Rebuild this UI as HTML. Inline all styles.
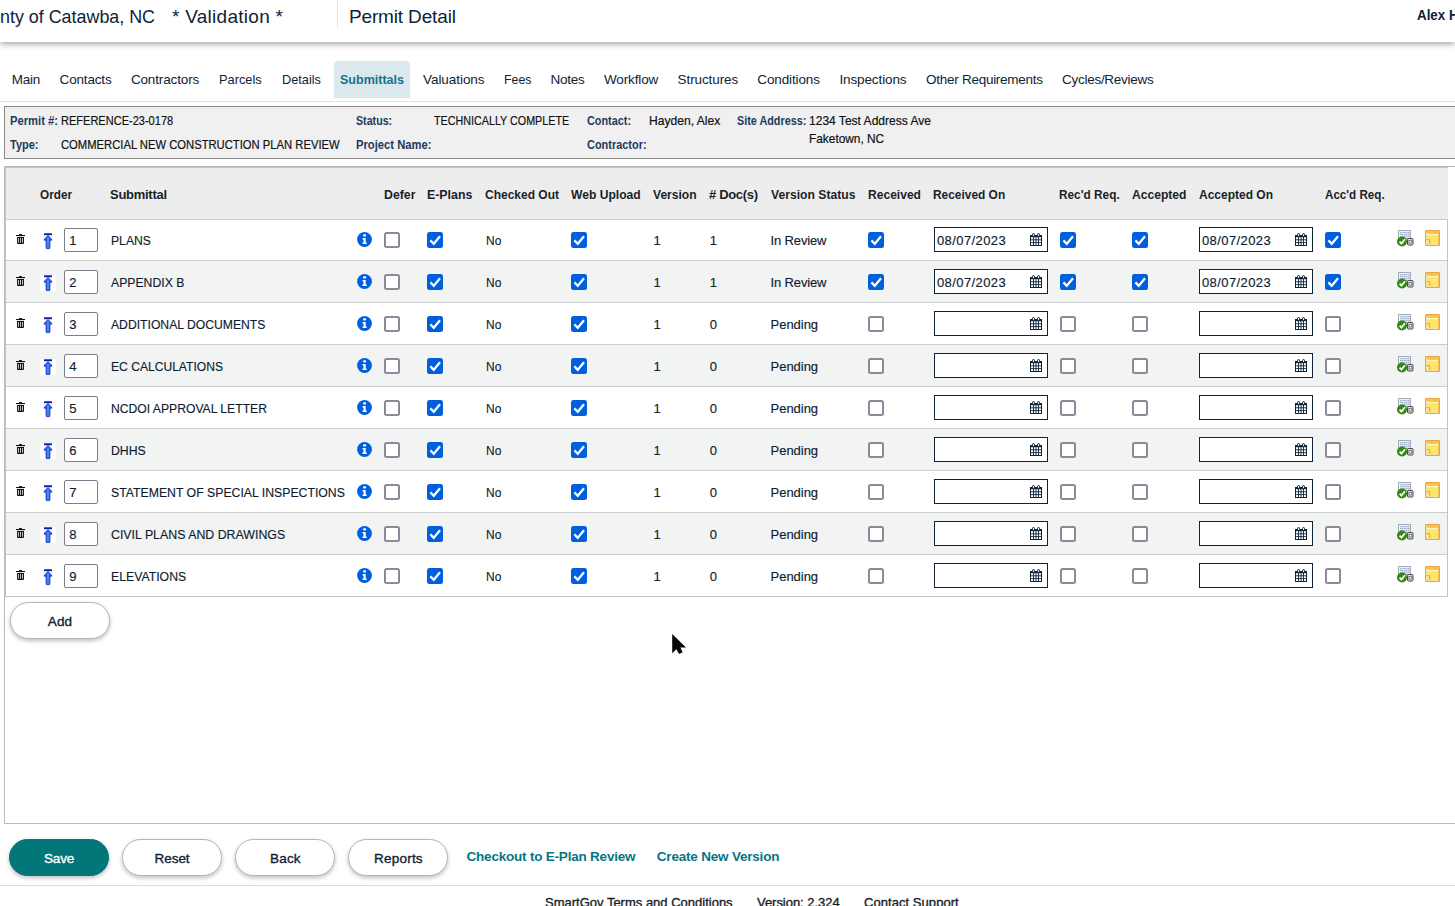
<!DOCTYPE html>
<html><head><meta charset="utf-8"><style>
html,body{margin:0;padding:0;background:#fff;width:1455px;height:906px;overflow:hidden;position:relative;font-family:"Liberation Sans",sans-serif;color:#0f2236}
.t{position:absolute;white-space:nowrap;line-height:normal}
.r{position:absolute;line-height:0}
.r svg{display:block}
.btn{position:absolute;box-sizing:border-box;border:1px solid #b5b5b5;border-radius:19px;background:#fff;box-shadow:0 2px 4px rgba(0,0,0,.25)}
</style></head><body>
<div class="r" style="left:0px;top:0px;width:1455px;height:42px;background:#fff;box-shadow:0 2px 6px rgba(0,0,0,.36);z-index:2"></div>
<div class="t" style="left:0.00px;top:5.70px;font-size:19px;transform:scaleX(0.9411);transform-origin:0 0;z-index:3">nty of Catawba, NC</div>
<div class="t" style="left:172.00px;top:5.70px;font-size:19px;letter-spacing:0.277px;z-index:3">* Validation *</div>
<div class="r" style="left:337px;top:0px;width:1px;height:28px;background:#e3e3e3;z-index:3"></div>
<div class="t" style="left:349.00px;top:5.70px;font-size:19px;letter-spacing:-0.150px;z-index:3">Permit Detail</div>
<div class="t" style="left:1417.40px;top:6.80px;font-size:14px;font-weight:bold;transform:scaleX(0.9541);transform-origin:0 0;z-index:3">Alex H</div>
<div class="r" style="left:334px;top:61px;width:76px;height:37px;background:#dbe8ee;border-radius:4px 4px 0 0"></div>
<div class="t" style="left:11.70px;top:72.20px;font-size:13.5px;letter-spacing:-0.267px;">Main</div>
<div class="t" style="left:59.60px;top:72.20px;font-size:13.5px;letter-spacing:-0.171px;">Contacts</div>
<div class="t" style="left:130.90px;top:72.20px;font-size:13.5px;letter-spacing:-0.140px;">Contractors</div>
<div class="t" style="left:219.00px;top:72.20px;font-size:13.5px;transform:scaleX(0.9489);transform-origin:0 0;">Parcels</div>
<div class="t" style="left:281.60px;top:72.20px;font-size:13.5px;transform:scaleX(0.9443);transform-origin:0 0;">Details</div>
<div class="t" style="left:340.00px;top:72.20px;font-size:13.5px;font-weight:bold;color:#17738a;transform:scaleX(0.9275);transform-origin:0 0;">Submittals</div>
<div class="t" style="left:423.00px;top:72.20px;font-size:13.5px;letter-spacing:-0.056px;">Valuations</div>
<div class="t" style="left:503.80px;top:72.20px;font-size:13.5px;transform:scaleX(0.9133);transform-origin:0 0;">Fees</div>
<div class="t" style="left:550.60px;top:72.20px;font-size:13.5px;letter-spacing:-0.300px;">Notes</div>
<div class="t" style="left:604.00px;top:72.20px;font-size:13.5px;letter-spacing:-0.143px;">Workflow</div>
<div class="t" style="left:677.60px;top:72.20px;font-size:13.5px;letter-spacing:-0.100px;">Structures</div>
<div class="t" style="left:757.30px;top:72.20px;font-size:13.5px;letter-spacing:-0.122px;">Conditions</div>
<div class="t" style="left:839.40px;top:72.20px;font-size:13.5px;letter-spacing:-0.110px;">Inspections</div>
<div class="t" style="left:926.00px;top:72.20px;font-size:13.5px;letter-spacing:-0.265px;">Other Requirements</div>
<div class="t" style="left:1062.00px;top:72.20px;font-size:13.5px;letter-spacing:-0.269px;">Cycles/Reviews</div>
<div class="r" style="left:0px;top:101px;width:1455px;height:1px;background:#e2e2e2"></div>
<div class="r" style="left:4px;top:106px;width:1460px;height:51px;background:#f0f0f0;border:1px solid #8a8a8a;box-sizing:content-box"></div>
<div class="t" style="left:10.00px;top:114.20px;font-size:12.5px;font-weight:bold;color:#1d3a5c;transform:scaleX(0.8972);transform-origin:0 0;">Permit #:</div>
<div class="t" style="left:61.20px;top:113.20px;font-size:13px;-webkit-text-stroke:0.2px currentColor;color:#111111;transform:scaleX(0.8482);transform-origin:0 0;">REFERENCE-23-0178</div>
<div class="t" style="left:10.00px;top:138.20px;font-size:12.5px;font-weight:bold;color:#1d3a5c;transform:scaleX(0.8796);transform-origin:0 0;">Type:</div>
<div class="t" style="left:61.20px;top:137.20px;font-size:13px;-webkit-text-stroke:0.2px currentColor;color:#111111;transform:scaleX(0.8642);transform-origin:0 0;">COMMERCIAL NEW CONSTRUCTION PLAN REVIEW</div>
<div class="t" style="left:356.00px;top:114.20px;font-size:12.5px;font-weight:bold;color:#1d3a5c;transform:scaleX(0.8538);transform-origin:0 0;">Status:</div>
<div class="t" style="left:434.30px;top:113.20px;font-size:13px;-webkit-text-stroke:0.2px currentColor;color:#111111;transform:scaleX(0.8265);transform-origin:0 0;">TECHNICALLY COMPLETE</div>
<div class="t" style="left:356.00px;top:138.20px;font-size:12.5px;font-weight:bold;color:#1d3a5c;transform:scaleX(0.8977);transform-origin:0 0;">Project Name:</div>
<div class="t" style="left:586.90px;top:114.20px;font-size:12.5px;font-weight:bold;color:#1d3a5c;transform:scaleX(0.8679);transform-origin:0 0;">Contact:</div>
<div class="t" style="left:649.30px;top:113.20px;font-size:13px;-webkit-text-stroke:0.2px currentColor;color:#111111;transform:scaleX(0.9310);transform-origin:0 0;">Hayden, Alex</div>
<div class="t" style="left:586.90px;top:138.20px;font-size:12.5px;font-weight:bold;color:#1d3a5c;transform:scaleX(0.8752);transform-origin:0 0;">Contractor:</div>
<div class="t" style="left:736.50px;top:114.30px;font-size:12.5px;font-weight:bold;color:#1d3a5c;transform:scaleX(0.8652);transform-origin:0 0;">Site Address:</div>
<div class="t" style="left:808.70px;top:113.30px;font-size:13px;-webkit-text-stroke:0.2px currentColor;color:#111111;transform:scaleX(0.9250);transform-origin:0 0;">1234 Test Address Ave</div>
<div class="t" style="left:808.70px;top:130.60px;font-size:13px;-webkit-text-stroke:0.2px currentColor;color:#111111;transform:scaleX(0.9128);transform-origin:0 0;">Faketown, NC</div>
<div class="r" style="left:4px;top:166px;width:1460px;height:656px;border:1px solid #b9b9b9;background:#fff;box-sizing:content-box"></div>
<div class="r" style="left:5px;top:167px;width:1443px;height:52px;background:#ededed"></div>
<div class="r" style="left:5px;top:167px;width:1443px;height:430px;border:1px solid #c4c4c4;border-right:0;box-sizing:border-box"></div>
<div class="r" style="left:1447px;top:219px;width:1px;height:378px;background:#c4c4c4"></div>
<div class="r" style="left:5px;top:219px;width:1443px;height:1px;background:#cbcbcb"></div>
<div class="t" style="left:40.00px;top:187.20px;font-size:13px;font-weight:bold;color:#1a1f2a;transform:scaleX(0.9040);transform-origin:0 0;">Order</div>
<div class="t" style="left:110.00px;top:187.20px;font-size:13px;font-weight:bold;color:#1a1f2a;letter-spacing:-0.275px;">Submittal</div>
<div class="t" style="left:384.00px;top:187.20px;font-size:13px;font-weight:bold;color:#1a1f2a;transform:scaleX(0.9458);transform-origin:0 0;">Defer</div>
<div class="t" style="left:427.00px;top:187.20px;font-size:13px;font-weight:bold;color:#1a1f2a;transform:scaleX(0.9497);transform-origin:0 0;">E-Plans</div>
<div class="t" style="left:485.00px;top:187.20px;font-size:13px;font-weight:bold;color:#1a1f2a;transform:scaleX(0.9227);transform-origin:0 0;">Checked Out</div>
<div class="t" style="left:571.00px;top:187.20px;font-size:13px;font-weight:bold;color:#1a1f2a;transform:scaleX(0.9306);transform-origin:0 0;">Web Upload</div>
<div class="t" style="left:653.40px;top:187.20px;font-size:13px;font-weight:bold;color:#1a1f2a;transform:scaleX(0.9277);transform-origin:0 0;">Version</div>
<div class="t" style="left:709.00px;top:187.20px;font-size:13px;font-weight:bold;color:#1a1f2a;letter-spacing:-0.329px;"># Doc(s)</div>
<div class="t" style="left:770.60px;top:187.20px;font-size:13px;font-weight:bold;color:#1a1f2a;transform:scaleX(0.9347);transform-origin:0 0;">Version Status</div>
<div class="t" style="left:868.00px;top:187.20px;font-size:13px;font-weight:bold;color:#1a1f2a;transform:scaleX(0.9282);transform-origin:0 0;">Received</div>
<div class="t" style="left:932.80px;top:187.20px;font-size:13px;font-weight:bold;color:#1a1f2a;transform:scaleX(0.9162);transform-origin:0 0;">Received On</div>
<div class="t" style="left:1059.00px;top:187.20px;font-size:13px;font-weight:bold;color:#1a1f2a;transform:scaleX(0.9100);transform-origin:0 0;">Rec'd Req.</div>
<div class="t" style="left:1132.00px;top:187.20px;font-size:13px;font-weight:bold;color:#1a1f2a;transform:scaleX(0.9299);transform-origin:0 0;">Accepted</div>
<div class="t" style="left:1199.00px;top:187.20px;font-size:13px;font-weight:bold;color:#1a1f2a;transform:scaleX(0.9227);transform-origin:0 0;">Accepted On</div>
<div class="t" style="left:1325.00px;top:187.20px;font-size:13px;font-weight:bold;color:#1a1f2a;transform:scaleX(0.8951);transform-origin:0 0;">Acc'd Req.</div>
<div class="r" style="left:16px;top:234px;"><svg width="10" height="11" viewBox="0 0 10 11"><rect x="3" y="0" width="3" height="1.3" rx=".6" fill="#111"/><rect x="0" y="1" width="9" height="1.1" fill="#111"/><path d="M1 3 H8 V9 Q8 10 7 10 H2 Q1 10 1 9 Z" fill="#111"/><rect x="1.95" y="4" width=".9" height="4.8" fill="#ddd"/><rect x="4.05" y="4" width=".9" height="4.8" fill="#ddd"/><rect x="6.15" y="4" width=".9" height="4.8" fill="#ddd"/></svg></div>
<div class="r" style="left:40px;top:233px;"><svg width="16" height="16" viewBox="0 0 16 16"><rect x="0" y="0" width="16" height="16" fill="#fff"/><rect x="4" y="0.3" width="8" height="1.9" fill="#0a1aa8"/><path d="M8 2.6 L11.8 6.3 L11.8 7.2 L9.9 7.2 L9.9 15 Q9.9 15.8 9 15.8 L7 15.8 Q6.1 15.8 6.1 15 L6.1 7.2 L4.2 7.2 L4.2 6.3 Z" fill="#2a62e6" stroke="#0b2bc0" stroke-width=".8"/><path d="M8 4.2 V14.8" stroke="#6aa8f6" stroke-width="1.1"/></svg></div>
<div class="r" style="left:64px;top:228px;width:34px;height:24px;border:1px solid #7d7d8c;border-radius:2px;box-sizing:border-box;background:#fff"></div>
<div class="t" style="left:69.30px;top:232.90px;font-size:13px;-webkit-text-stroke:0.15px currentColor;color:#0e1c30;">1</div>
<div class="t" style="left:110.50px;top:232.90px;font-size:13px;-webkit-text-stroke:0.15px currentColor;color:#0e1c30;transform:scaleX(0.9357);transform-origin:0 0;">PLANS</div>
<div class="r" style="left:357px;top:232px;"><svg width="15" height="15" viewBox="0 0 15 15"><circle cx="7.5" cy="7.5" r="7.4" fill="#005fdc"/><rect x="6.1" y="2.2" width="3" height="2.4" rx=".8" fill="#fff"/><path d="M5.6 6.1 H8.7 V10.4 H9.7 V11.9 H5.5 V10.4 H6.5 V7.6 H5.6 Z" fill="#fff"/></svg></div>
<div class="r" style="left:384px;top:232px;"><svg width="16" height="16" viewBox="0 0 16 16"><rect x="1" y="1" width="14" height="14" rx="1.5" fill="#fff" stroke="#8a8a98" stroke-width="2"/></svg></div>
<div class="r" style="left:427px;top:232px;"><svg width="16" height="16" viewBox="0 0 16 16"><rect x="0" y="0" width="16" height="16" rx="2.5" fill="#005fdc"/><path d="M3.4 8.4 L6.8 11.8 L13 4.2" fill="none" stroke="#fff" stroke-width="2.2"/></svg></div>
<div class="t" style="left:485.60px;top:232.90px;font-size:13px;-webkit-text-stroke:0.15px currentColor;color:#0e1c30;transform:scaleX(0.9194);transform-origin:0 0;">No</div>
<div class="r" style="left:571px;top:232px;"><svg width="16" height="16" viewBox="0 0 16 16"><rect x="0" y="0" width="16" height="16" rx="2.5" fill="#005fdc"/><path d="M3.4 8.4 L6.8 11.8 L13 4.2" fill="none" stroke="#fff" stroke-width="2.2"/></svg></div>
<div class="t" style="left:653.40px;top:232.90px;font-size:13px;-webkit-text-stroke:0.15px currentColor;color:#0e1c30;">1</div>
<div class="t" style="left:709.70px;top:232.90px;font-size:13px;-webkit-text-stroke:0.15px currentColor;color:#0e1c30;">1</div>
<div class="t" style="left:770.60px;top:232.90px;font-size:13px;-webkit-text-stroke:0.15px currentColor;color:#0e1c30;letter-spacing:-0.156px;">In Review</div>
<div class="r" style="left:868px;top:232px;"><svg width="16" height="16" viewBox="0 0 16 16"><rect x="0" y="0" width="16" height="16" rx="2.5" fill="#005fdc"/><path d="M3.4 8.4 L6.8 11.8 L13 4.2" fill="none" stroke="#fff" stroke-width="2.2"/></svg></div>
<div class="r" style="left:934px;top:227px;width:114px;height:25px;border:1px solid #0f2236;box-sizing:border-box;background:#fff"></div>
<div class="r" style="left:1030px;top:233px;"><svg width="12" height="13" viewBox="0 0 12 13"><rect x="0.5" y="2.5" width="11" height="10" fill="#fff" stroke="#0f2236" stroke-width="1"/><rect x="0" y="2" width="12" height="2.2" fill="#0f2236"/><rect x="2.5" y="0.5" width="2" height="3" rx="1" fill="#dfe6ee" stroke="#0f2236" stroke-width="1"/><rect x="7.5" y="0.5" width="2" height="3" rx="1" fill="#dfe6ee" stroke="#0f2236" stroke-width="1"/><path d="M3.5 4 V12.5 M6 4 V12.5 M8.5 4 V12.5 M0.5 6.8 H11.5 M0.5 9.6 H11.5" stroke="#0f2236" stroke-width=".9"/></svg></div>
<div class="r" style="left:1060px;top:232px;"><svg width="16" height="16" viewBox="0 0 16 16"><rect x="0" y="0" width="16" height="16" rx="2.5" fill="#005fdc"/><path d="M3.4 8.4 L6.8 11.8 L13 4.2" fill="none" stroke="#fff" stroke-width="2.2"/></svg></div>
<div class="r" style="left:1132px;top:232px;"><svg width="16" height="16" viewBox="0 0 16 16"><rect x="0" y="0" width="16" height="16" rx="2.5" fill="#005fdc"/><path d="M3.4 8.4 L6.8 11.8 L13 4.2" fill="none" stroke="#fff" stroke-width="2.2"/></svg></div>
<div class="r" style="left:1199px;top:227px;width:114px;height:25px;border:1px solid #0f2236;box-sizing:border-box;background:#fff"></div>
<div class="r" style="left:1295px;top:233px;"><svg width="12" height="13" viewBox="0 0 12 13"><rect x="0.5" y="2.5" width="11" height="10" fill="#fff" stroke="#0f2236" stroke-width="1"/><rect x="0" y="2" width="12" height="2.2" fill="#0f2236"/><rect x="2.5" y="0.5" width="2" height="3" rx="1" fill="#dfe6ee" stroke="#0f2236" stroke-width="1"/><rect x="7.5" y="0.5" width="2" height="3" rx="1" fill="#dfe6ee" stroke="#0f2236" stroke-width="1"/><path d="M3.5 4 V12.5 M6 4 V12.5 M8.5 4 V12.5 M0.5 6.8 H11.5 M0.5 9.6 H11.5" stroke="#0f2236" stroke-width=".9"/></svg></div>
<div class="r" style="left:1325px;top:232px;"><svg width="16" height="16" viewBox="0 0 16 16"><rect x="0" y="0" width="16" height="16" rx="2.5" fill="#005fdc"/><path d="M3.4 8.4 L6.8 11.8 L13 4.2" fill="none" stroke="#fff" stroke-width="2.2"/></svg></div>
<div class="t" style="left:937.00px;top:232.90px;font-size:13px;-webkit-text-stroke:0.15px currentColor;color:#0e1c30;letter-spacing:0.394px;">08/07/2023</div>
<div class="t" style="left:1202.00px;top:232.90px;font-size:13px;-webkit-text-stroke:0.15px currentColor;color:#0e1c30;letter-spacing:0.394px;">08/07/2023</div>
<div class="r" style="left:1397px;top:230px;"><svg width="17" height="17" viewBox="0 0 17 17"><rect x="1.5" y="0.5" width="12" height="8" fill="#eef2f8" stroke="#a3abb8" stroke-width="1"/><rect x="3.2" y="2" width="1.3" height="1.3" fill="#93a6c2"/><rect x="5.2" y="2" width="1.3" height="1.3" fill="#93a6c2"/><rect x="7.2" y="2" width="1.3" height="1.3" fill="#93a6c2"/><rect x="9.2" y="2" width="1.3" height="1.3" fill="#93a6c2"/><rect x="11.2" y="2" width="1.3" height="1.3" fill="#93a6c2"/><rect x="3.2" y="4" width="1.3" height="1.3" fill="#93a6c2"/><rect x="5.2" y="4" width="1.3" height="1.3" fill="#93a6c2"/><rect x="7.2" y="4" width="1.3" height="1.3" fill="#93a6c2"/><rect x="9.2" y="4" width="1.3" height="1.3" fill="#93a6c2"/><rect x="11.2" y="4" width="1.3" height="1.3" fill="#93a6c2"/><rect x="3.2" y="6" width="1.3" height="1.3" fill="#93a6c2"/><rect x="5.2" y="6" width="1.3" height="1.3" fill="#93a6c2"/><rect x="7.2" y="6" width="1.3" height="1.3" fill="#93a6c2"/><rect x="9.2" y="6" width="1.3" height="1.3" fill="#93a6c2"/><rect x="11.2" y="6" width="1.3" height="1.3" fill="#93a6c2"/><rect x="10.5" y="8.5" width="5.5" height="6.5" rx="1" fill="#d8d8d8" stroke="#4a4a4a" stroke-width="1"/><rect x="12" y="10.6" width="2.6" height="2.4" fill="#fff" stroke="#444" stroke-width=".6"/><circle cx="5" cy="11.5" r="5" fill="#348812"/><path d="M2.6 11.6 L4.5 13.6 L7.9 9.3" fill="none" stroke="#fff" stroke-width="1.7"/></svg></div>
<div class="r" style="left:1425px;top:230px;"><svg width="15" height="16" viewBox="0 0 15 16"><rect x="0.75" y="0.75" width="13.5" height="14.5" rx=".6" fill="#fde56a" stroke="#eda24a" stroke-width="1.5"/><rect x="2" y="2" width="11" height="1.8" fill="#f3c543"/><rect x="2" y="4" width="11" height="1.2" fill="#fef6c0"/><path d="M1.5 2 V14.5 H13" fill="none" stroke="#fef6c0" stroke-width=".6"/><path d="M1.5 9.6 H4.8 V14.2" fill="none" stroke="#e6a35c" stroke-width="1"/></svg></div>
<div class="r" style="left:6px;top:261px;width:1441px;height:41px;background:#f2f4f4"></div>
<div class="r" style="left:6px;top:260px;width:1441px;height:1px;background:#cdcdcd"></div>
<div class="r" style="left:16px;top:276px;"><svg width="10" height="11" viewBox="0 0 10 11"><rect x="3" y="0" width="3" height="1.3" rx=".6" fill="#111"/><rect x="0" y="1" width="9" height="1.1" fill="#111"/><path d="M1 3 H8 V9 Q8 10 7 10 H2 Q1 10 1 9 Z" fill="#111"/><rect x="1.95" y="4" width=".9" height="4.8" fill="#ddd"/><rect x="4.05" y="4" width=".9" height="4.8" fill="#ddd"/><rect x="6.15" y="4" width=".9" height="4.8" fill="#ddd"/></svg></div>
<div class="r" style="left:40px;top:275px;"><svg width="16" height="16" viewBox="0 0 16 16"><rect x="0" y="0" width="16" height="16" fill="#fff"/><rect x="4" y="0.3" width="8" height="1.9" fill="#0a1aa8"/><path d="M8 2.6 L11.8 6.3 L11.8 7.2 L9.9 7.2 L9.9 15 Q9.9 15.8 9 15.8 L7 15.8 Q6.1 15.8 6.1 15 L6.1 7.2 L4.2 7.2 L4.2 6.3 Z" fill="#2a62e6" stroke="#0b2bc0" stroke-width=".8"/><path d="M8 4.2 V14.8" stroke="#6aa8f6" stroke-width="1.1"/></svg></div>
<div class="r" style="left:64px;top:270px;width:34px;height:24px;border:1px solid #7d7d8c;border-radius:2px;box-sizing:border-box;background:#fff"></div>
<div class="t" style="left:69.30px;top:274.90px;font-size:13px;-webkit-text-stroke:0.15px currentColor;color:#0e1c30;">2</div>
<div class="t" style="left:110.50px;top:274.90px;font-size:13px;-webkit-text-stroke:0.15px currentColor;color:#0e1c30;transform:scaleX(0.9405);transform-origin:0 0;">APPENDIX B</div>
<div class="r" style="left:357px;top:274px;"><svg width="15" height="15" viewBox="0 0 15 15"><circle cx="7.5" cy="7.5" r="7.4" fill="#005fdc"/><rect x="6.1" y="2.2" width="3" height="2.4" rx=".8" fill="#fff"/><path d="M5.6 6.1 H8.7 V10.4 H9.7 V11.9 H5.5 V10.4 H6.5 V7.6 H5.6 Z" fill="#fff"/></svg></div>
<div class="r" style="left:384px;top:274px;"><svg width="16" height="16" viewBox="0 0 16 16"><rect x="1" y="1" width="14" height="14" rx="1.5" fill="#fff" stroke="#8a8a98" stroke-width="2"/></svg></div>
<div class="r" style="left:427px;top:274px;"><svg width="16" height="16" viewBox="0 0 16 16"><rect x="0" y="0" width="16" height="16" rx="2.5" fill="#005fdc"/><path d="M3.4 8.4 L6.8 11.8 L13 4.2" fill="none" stroke="#fff" stroke-width="2.2"/></svg></div>
<div class="t" style="left:485.60px;top:274.90px;font-size:13px;-webkit-text-stroke:0.15px currentColor;color:#0e1c30;transform:scaleX(0.9194);transform-origin:0 0;">No</div>
<div class="r" style="left:571px;top:274px;"><svg width="16" height="16" viewBox="0 0 16 16"><rect x="0" y="0" width="16" height="16" rx="2.5" fill="#005fdc"/><path d="M3.4 8.4 L6.8 11.8 L13 4.2" fill="none" stroke="#fff" stroke-width="2.2"/></svg></div>
<div class="t" style="left:653.40px;top:274.90px;font-size:13px;-webkit-text-stroke:0.15px currentColor;color:#0e1c30;">1</div>
<div class="t" style="left:709.70px;top:274.90px;font-size:13px;-webkit-text-stroke:0.15px currentColor;color:#0e1c30;">1</div>
<div class="t" style="left:770.60px;top:274.90px;font-size:13px;-webkit-text-stroke:0.15px currentColor;color:#0e1c30;letter-spacing:-0.156px;">In Review</div>
<div class="r" style="left:868px;top:274px;"><svg width="16" height="16" viewBox="0 0 16 16"><rect x="0" y="0" width="16" height="16" rx="2.5" fill="#005fdc"/><path d="M3.4 8.4 L6.8 11.8 L13 4.2" fill="none" stroke="#fff" stroke-width="2.2"/></svg></div>
<div class="r" style="left:934px;top:269px;width:114px;height:25px;border:1px solid #0f2236;box-sizing:border-box;background:#fff"></div>
<div class="r" style="left:1030px;top:275px;"><svg width="12" height="13" viewBox="0 0 12 13"><rect x="0.5" y="2.5" width="11" height="10" fill="#fff" stroke="#0f2236" stroke-width="1"/><rect x="0" y="2" width="12" height="2.2" fill="#0f2236"/><rect x="2.5" y="0.5" width="2" height="3" rx="1" fill="#dfe6ee" stroke="#0f2236" stroke-width="1"/><rect x="7.5" y="0.5" width="2" height="3" rx="1" fill="#dfe6ee" stroke="#0f2236" stroke-width="1"/><path d="M3.5 4 V12.5 M6 4 V12.5 M8.5 4 V12.5 M0.5 6.8 H11.5 M0.5 9.6 H11.5" stroke="#0f2236" stroke-width=".9"/></svg></div>
<div class="r" style="left:1060px;top:274px;"><svg width="16" height="16" viewBox="0 0 16 16"><rect x="0" y="0" width="16" height="16" rx="2.5" fill="#005fdc"/><path d="M3.4 8.4 L6.8 11.8 L13 4.2" fill="none" stroke="#fff" stroke-width="2.2"/></svg></div>
<div class="r" style="left:1132px;top:274px;"><svg width="16" height="16" viewBox="0 0 16 16"><rect x="0" y="0" width="16" height="16" rx="2.5" fill="#005fdc"/><path d="M3.4 8.4 L6.8 11.8 L13 4.2" fill="none" stroke="#fff" stroke-width="2.2"/></svg></div>
<div class="r" style="left:1199px;top:269px;width:114px;height:25px;border:1px solid #0f2236;box-sizing:border-box;background:#fff"></div>
<div class="r" style="left:1295px;top:275px;"><svg width="12" height="13" viewBox="0 0 12 13"><rect x="0.5" y="2.5" width="11" height="10" fill="#fff" stroke="#0f2236" stroke-width="1"/><rect x="0" y="2" width="12" height="2.2" fill="#0f2236"/><rect x="2.5" y="0.5" width="2" height="3" rx="1" fill="#dfe6ee" stroke="#0f2236" stroke-width="1"/><rect x="7.5" y="0.5" width="2" height="3" rx="1" fill="#dfe6ee" stroke="#0f2236" stroke-width="1"/><path d="M3.5 4 V12.5 M6 4 V12.5 M8.5 4 V12.5 M0.5 6.8 H11.5 M0.5 9.6 H11.5" stroke="#0f2236" stroke-width=".9"/></svg></div>
<div class="r" style="left:1325px;top:274px;"><svg width="16" height="16" viewBox="0 0 16 16"><rect x="0" y="0" width="16" height="16" rx="2.5" fill="#005fdc"/><path d="M3.4 8.4 L6.8 11.8 L13 4.2" fill="none" stroke="#fff" stroke-width="2.2"/></svg></div>
<div class="t" style="left:937.00px;top:274.90px;font-size:13px;-webkit-text-stroke:0.15px currentColor;color:#0e1c30;letter-spacing:0.394px;">08/07/2023</div>
<div class="t" style="left:1202.00px;top:274.90px;font-size:13px;-webkit-text-stroke:0.15px currentColor;color:#0e1c30;letter-spacing:0.394px;">08/07/2023</div>
<div class="r" style="left:1397px;top:272px;"><svg width="17" height="17" viewBox="0 0 17 17"><rect x="1.5" y="0.5" width="12" height="8" fill="#eef2f8" stroke="#a3abb8" stroke-width="1"/><rect x="3.2" y="2" width="1.3" height="1.3" fill="#93a6c2"/><rect x="5.2" y="2" width="1.3" height="1.3" fill="#93a6c2"/><rect x="7.2" y="2" width="1.3" height="1.3" fill="#93a6c2"/><rect x="9.2" y="2" width="1.3" height="1.3" fill="#93a6c2"/><rect x="11.2" y="2" width="1.3" height="1.3" fill="#93a6c2"/><rect x="3.2" y="4" width="1.3" height="1.3" fill="#93a6c2"/><rect x="5.2" y="4" width="1.3" height="1.3" fill="#93a6c2"/><rect x="7.2" y="4" width="1.3" height="1.3" fill="#93a6c2"/><rect x="9.2" y="4" width="1.3" height="1.3" fill="#93a6c2"/><rect x="11.2" y="4" width="1.3" height="1.3" fill="#93a6c2"/><rect x="3.2" y="6" width="1.3" height="1.3" fill="#93a6c2"/><rect x="5.2" y="6" width="1.3" height="1.3" fill="#93a6c2"/><rect x="7.2" y="6" width="1.3" height="1.3" fill="#93a6c2"/><rect x="9.2" y="6" width="1.3" height="1.3" fill="#93a6c2"/><rect x="11.2" y="6" width="1.3" height="1.3" fill="#93a6c2"/><rect x="10.5" y="8.5" width="5.5" height="6.5" rx="1" fill="#d8d8d8" stroke="#4a4a4a" stroke-width="1"/><rect x="12" y="10.6" width="2.6" height="2.4" fill="#fff" stroke="#444" stroke-width=".6"/><circle cx="5" cy="11.5" r="5" fill="#348812"/><path d="M2.6 11.6 L4.5 13.6 L7.9 9.3" fill="none" stroke="#fff" stroke-width="1.7"/></svg></div>
<div class="r" style="left:1425px;top:272px;"><svg width="15" height="16" viewBox="0 0 15 16"><rect x="0.75" y="0.75" width="13.5" height="14.5" rx=".6" fill="#fde56a" stroke="#eda24a" stroke-width="1.5"/><rect x="2" y="2" width="11" height="1.8" fill="#f3c543"/><rect x="2" y="4" width="11" height="1.2" fill="#fef6c0"/><path d="M1.5 2 V14.5 H13" fill="none" stroke="#fef6c0" stroke-width=".6"/><path d="M1.5 9.6 H4.8 V14.2" fill="none" stroke="#e6a35c" stroke-width="1"/></svg></div>
<div class="r" style="left:6px;top:302px;width:1441px;height:1px;background:#cdcdcd"></div>
<div class="r" style="left:16px;top:318px;"><svg width="10" height="11" viewBox="0 0 10 11"><rect x="3" y="0" width="3" height="1.3" rx=".6" fill="#111"/><rect x="0" y="1" width="9" height="1.1" fill="#111"/><path d="M1 3 H8 V9 Q8 10 7 10 H2 Q1 10 1 9 Z" fill="#111"/><rect x="1.95" y="4" width=".9" height="4.8" fill="#ddd"/><rect x="4.05" y="4" width=".9" height="4.8" fill="#ddd"/><rect x="6.15" y="4" width=".9" height="4.8" fill="#ddd"/></svg></div>
<div class="r" style="left:40px;top:317px;"><svg width="16" height="16" viewBox="0 0 16 16"><rect x="0" y="0" width="16" height="16" fill="#fff"/><rect x="4" y="0.3" width="8" height="1.9" fill="#0a1aa8"/><path d="M8 2.6 L11.8 6.3 L11.8 7.2 L9.9 7.2 L9.9 15 Q9.9 15.8 9 15.8 L7 15.8 Q6.1 15.8 6.1 15 L6.1 7.2 L4.2 7.2 L4.2 6.3 Z" fill="#2a62e6" stroke="#0b2bc0" stroke-width=".8"/><path d="M8 4.2 V14.8" stroke="#6aa8f6" stroke-width="1.1"/></svg></div>
<div class="r" style="left:64px;top:312px;width:34px;height:24px;border:1px solid #7d7d8c;border-radius:2px;box-sizing:border-box;background:#fff"></div>
<div class="t" style="left:69.30px;top:316.90px;font-size:13px;-webkit-text-stroke:0.15px currentColor;color:#0e1c30;">3</div>
<div class="t" style="left:110.50px;top:316.90px;font-size:13px;-webkit-text-stroke:0.15px currentColor;color:#0e1c30;transform:scaleX(0.9361);transform-origin:0 0;">ADDITIONAL DOCUMENTS</div>
<div class="r" style="left:357px;top:316px;"><svg width="15" height="15" viewBox="0 0 15 15"><circle cx="7.5" cy="7.5" r="7.4" fill="#005fdc"/><rect x="6.1" y="2.2" width="3" height="2.4" rx=".8" fill="#fff"/><path d="M5.6 6.1 H8.7 V10.4 H9.7 V11.9 H5.5 V10.4 H6.5 V7.6 H5.6 Z" fill="#fff"/></svg></div>
<div class="r" style="left:384px;top:316px;"><svg width="16" height="16" viewBox="0 0 16 16"><rect x="1" y="1" width="14" height="14" rx="1.5" fill="#fff" stroke="#8a8a98" stroke-width="2"/></svg></div>
<div class="r" style="left:427px;top:316px;"><svg width="16" height="16" viewBox="0 0 16 16"><rect x="0" y="0" width="16" height="16" rx="2.5" fill="#005fdc"/><path d="M3.4 8.4 L6.8 11.8 L13 4.2" fill="none" stroke="#fff" stroke-width="2.2"/></svg></div>
<div class="t" style="left:485.60px;top:316.90px;font-size:13px;-webkit-text-stroke:0.15px currentColor;color:#0e1c30;transform:scaleX(0.9194);transform-origin:0 0;">No</div>
<div class="r" style="left:571px;top:316px;"><svg width="16" height="16" viewBox="0 0 16 16"><rect x="0" y="0" width="16" height="16" rx="2.5" fill="#005fdc"/><path d="M3.4 8.4 L6.8 11.8 L13 4.2" fill="none" stroke="#fff" stroke-width="2.2"/></svg></div>
<div class="t" style="left:653.40px;top:316.90px;font-size:13px;-webkit-text-stroke:0.15px currentColor;color:#0e1c30;">1</div>
<div class="t" style="left:709.70px;top:316.90px;font-size:13px;-webkit-text-stroke:0.15px currentColor;color:#0e1c30;">0</div>
<div class="t" style="left:770.60px;top:316.90px;font-size:13px;-webkit-text-stroke:0.15px currentColor;color:#0e1c30;letter-spacing:-0.042px;">Pending</div>
<div class="r" style="left:868px;top:316px;"><svg width="16" height="16" viewBox="0 0 16 16"><rect x="1" y="1" width="14" height="14" rx="1.5" fill="#fff" stroke="#8a8a98" stroke-width="2"/></svg></div>
<div class="r" style="left:934px;top:311px;width:114px;height:25px;border:1px solid #0f2236;box-sizing:border-box;background:#fff"></div>
<div class="r" style="left:1030px;top:317px;"><svg width="12" height="13" viewBox="0 0 12 13"><rect x="0.5" y="2.5" width="11" height="10" fill="#fff" stroke="#0f2236" stroke-width="1"/><rect x="0" y="2" width="12" height="2.2" fill="#0f2236"/><rect x="2.5" y="0.5" width="2" height="3" rx="1" fill="#dfe6ee" stroke="#0f2236" stroke-width="1"/><rect x="7.5" y="0.5" width="2" height="3" rx="1" fill="#dfe6ee" stroke="#0f2236" stroke-width="1"/><path d="M3.5 4 V12.5 M6 4 V12.5 M8.5 4 V12.5 M0.5 6.8 H11.5 M0.5 9.6 H11.5" stroke="#0f2236" stroke-width=".9"/></svg></div>
<div class="r" style="left:1060px;top:316px;"><svg width="16" height="16" viewBox="0 0 16 16"><rect x="1" y="1" width="14" height="14" rx="1.5" fill="#fff" stroke="#8a8a98" stroke-width="2"/></svg></div>
<div class="r" style="left:1132px;top:316px;"><svg width="16" height="16" viewBox="0 0 16 16"><rect x="1" y="1" width="14" height="14" rx="1.5" fill="#fff" stroke="#8a8a98" stroke-width="2"/></svg></div>
<div class="r" style="left:1199px;top:311px;width:114px;height:25px;border:1px solid #0f2236;box-sizing:border-box;background:#fff"></div>
<div class="r" style="left:1295px;top:317px;"><svg width="12" height="13" viewBox="0 0 12 13"><rect x="0.5" y="2.5" width="11" height="10" fill="#fff" stroke="#0f2236" stroke-width="1"/><rect x="0" y="2" width="12" height="2.2" fill="#0f2236"/><rect x="2.5" y="0.5" width="2" height="3" rx="1" fill="#dfe6ee" stroke="#0f2236" stroke-width="1"/><rect x="7.5" y="0.5" width="2" height="3" rx="1" fill="#dfe6ee" stroke="#0f2236" stroke-width="1"/><path d="M3.5 4 V12.5 M6 4 V12.5 M8.5 4 V12.5 M0.5 6.8 H11.5 M0.5 9.6 H11.5" stroke="#0f2236" stroke-width=".9"/></svg></div>
<div class="r" style="left:1325px;top:316px;"><svg width="16" height="16" viewBox="0 0 16 16"><rect x="1" y="1" width="14" height="14" rx="1.5" fill="#fff" stroke="#8a8a98" stroke-width="2"/></svg></div>
<div class="r" style="left:1397px;top:314px;"><svg width="17" height="17" viewBox="0 0 17 17"><rect x="1.5" y="0.5" width="12" height="8" fill="#eef2f8" stroke="#a3abb8" stroke-width="1"/><rect x="3.2" y="2" width="1.3" height="1.3" fill="#93a6c2"/><rect x="5.2" y="2" width="1.3" height="1.3" fill="#93a6c2"/><rect x="7.2" y="2" width="1.3" height="1.3" fill="#93a6c2"/><rect x="9.2" y="2" width="1.3" height="1.3" fill="#93a6c2"/><rect x="11.2" y="2" width="1.3" height="1.3" fill="#93a6c2"/><rect x="3.2" y="4" width="1.3" height="1.3" fill="#93a6c2"/><rect x="5.2" y="4" width="1.3" height="1.3" fill="#93a6c2"/><rect x="7.2" y="4" width="1.3" height="1.3" fill="#93a6c2"/><rect x="9.2" y="4" width="1.3" height="1.3" fill="#93a6c2"/><rect x="11.2" y="4" width="1.3" height="1.3" fill="#93a6c2"/><rect x="3.2" y="6" width="1.3" height="1.3" fill="#93a6c2"/><rect x="5.2" y="6" width="1.3" height="1.3" fill="#93a6c2"/><rect x="7.2" y="6" width="1.3" height="1.3" fill="#93a6c2"/><rect x="9.2" y="6" width="1.3" height="1.3" fill="#93a6c2"/><rect x="11.2" y="6" width="1.3" height="1.3" fill="#93a6c2"/><rect x="10.5" y="8.5" width="5.5" height="6.5" rx="1" fill="#d8d8d8" stroke="#4a4a4a" stroke-width="1"/><rect x="12" y="10.6" width="2.6" height="2.4" fill="#fff" stroke="#444" stroke-width=".6"/><circle cx="5" cy="11.5" r="5" fill="#348812"/><path d="M2.6 11.6 L4.5 13.6 L7.9 9.3" fill="none" stroke="#fff" stroke-width="1.7"/></svg></div>
<div class="r" style="left:1425px;top:314px;"><svg width="15" height="16" viewBox="0 0 15 16"><rect x="0.75" y="0.75" width="13.5" height="14.5" rx=".6" fill="#fde56a" stroke="#eda24a" stroke-width="1.5"/><rect x="2" y="2" width="11" height="1.8" fill="#f3c543"/><rect x="2" y="4" width="11" height="1.2" fill="#fef6c0"/><path d="M1.5 2 V14.5 H13" fill="none" stroke="#fef6c0" stroke-width=".6"/><path d="M1.5 9.6 H4.8 V14.2" fill="none" stroke="#e6a35c" stroke-width="1"/></svg></div>
<div class="r" style="left:6px;top:345px;width:1441px;height:41px;background:#f2f4f4"></div>
<div class="r" style="left:6px;top:344px;width:1441px;height:1px;background:#cdcdcd"></div>
<div class="r" style="left:16px;top:360px;"><svg width="10" height="11" viewBox="0 0 10 11"><rect x="3" y="0" width="3" height="1.3" rx=".6" fill="#111"/><rect x="0" y="1" width="9" height="1.1" fill="#111"/><path d="M1 3 H8 V9 Q8 10 7 10 H2 Q1 10 1 9 Z" fill="#111"/><rect x="1.95" y="4" width=".9" height="4.8" fill="#ddd"/><rect x="4.05" y="4" width=".9" height="4.8" fill="#ddd"/><rect x="6.15" y="4" width=".9" height="4.8" fill="#ddd"/></svg></div>
<div class="r" style="left:40px;top:359px;"><svg width="16" height="16" viewBox="0 0 16 16"><rect x="0" y="0" width="16" height="16" fill="#fff"/><rect x="4" y="0.3" width="8" height="1.9" fill="#0a1aa8"/><path d="M8 2.6 L11.8 6.3 L11.8 7.2 L9.9 7.2 L9.9 15 Q9.9 15.8 9 15.8 L7 15.8 Q6.1 15.8 6.1 15 L6.1 7.2 L4.2 7.2 L4.2 6.3 Z" fill="#2a62e6" stroke="#0b2bc0" stroke-width=".8"/><path d="M8 4.2 V14.8" stroke="#6aa8f6" stroke-width="1.1"/></svg></div>
<div class="r" style="left:64px;top:354px;width:34px;height:24px;border:1px solid #7d7d8c;border-radius:2px;box-sizing:border-box;background:#fff"></div>
<div class="t" style="left:69.30px;top:358.90px;font-size:13px;-webkit-text-stroke:0.15px currentColor;color:#0e1c30;">4</div>
<div class="t" style="left:110.50px;top:358.90px;font-size:13px;-webkit-text-stroke:0.15px currentColor;color:#0e1c30;transform:scaleX(0.9299);transform-origin:0 0;">EC CALCULATIONS</div>
<div class="r" style="left:357px;top:358px;"><svg width="15" height="15" viewBox="0 0 15 15"><circle cx="7.5" cy="7.5" r="7.4" fill="#005fdc"/><rect x="6.1" y="2.2" width="3" height="2.4" rx=".8" fill="#fff"/><path d="M5.6 6.1 H8.7 V10.4 H9.7 V11.9 H5.5 V10.4 H6.5 V7.6 H5.6 Z" fill="#fff"/></svg></div>
<div class="r" style="left:384px;top:358px;"><svg width="16" height="16" viewBox="0 0 16 16"><rect x="1" y="1" width="14" height="14" rx="1.5" fill="#fff" stroke="#8a8a98" stroke-width="2"/></svg></div>
<div class="r" style="left:427px;top:358px;"><svg width="16" height="16" viewBox="0 0 16 16"><rect x="0" y="0" width="16" height="16" rx="2.5" fill="#005fdc"/><path d="M3.4 8.4 L6.8 11.8 L13 4.2" fill="none" stroke="#fff" stroke-width="2.2"/></svg></div>
<div class="t" style="left:485.60px;top:358.90px;font-size:13px;-webkit-text-stroke:0.15px currentColor;color:#0e1c30;transform:scaleX(0.9194);transform-origin:0 0;">No</div>
<div class="r" style="left:571px;top:358px;"><svg width="16" height="16" viewBox="0 0 16 16"><rect x="0" y="0" width="16" height="16" rx="2.5" fill="#005fdc"/><path d="M3.4 8.4 L6.8 11.8 L13 4.2" fill="none" stroke="#fff" stroke-width="2.2"/></svg></div>
<div class="t" style="left:653.40px;top:358.90px;font-size:13px;-webkit-text-stroke:0.15px currentColor;color:#0e1c30;">1</div>
<div class="t" style="left:709.70px;top:358.90px;font-size:13px;-webkit-text-stroke:0.15px currentColor;color:#0e1c30;">0</div>
<div class="t" style="left:770.60px;top:358.90px;font-size:13px;-webkit-text-stroke:0.15px currentColor;color:#0e1c30;letter-spacing:-0.042px;">Pending</div>
<div class="r" style="left:868px;top:358px;"><svg width="16" height="16" viewBox="0 0 16 16"><rect x="1" y="1" width="14" height="14" rx="1.5" fill="#fff" stroke="#8a8a98" stroke-width="2"/></svg></div>
<div class="r" style="left:934px;top:353px;width:114px;height:25px;border:1px solid #0f2236;box-sizing:border-box;background:#fff"></div>
<div class="r" style="left:1030px;top:359px;"><svg width="12" height="13" viewBox="0 0 12 13"><rect x="0.5" y="2.5" width="11" height="10" fill="#fff" stroke="#0f2236" stroke-width="1"/><rect x="0" y="2" width="12" height="2.2" fill="#0f2236"/><rect x="2.5" y="0.5" width="2" height="3" rx="1" fill="#dfe6ee" stroke="#0f2236" stroke-width="1"/><rect x="7.5" y="0.5" width="2" height="3" rx="1" fill="#dfe6ee" stroke="#0f2236" stroke-width="1"/><path d="M3.5 4 V12.5 M6 4 V12.5 M8.5 4 V12.5 M0.5 6.8 H11.5 M0.5 9.6 H11.5" stroke="#0f2236" stroke-width=".9"/></svg></div>
<div class="r" style="left:1060px;top:358px;"><svg width="16" height="16" viewBox="0 0 16 16"><rect x="1" y="1" width="14" height="14" rx="1.5" fill="#fff" stroke="#8a8a98" stroke-width="2"/></svg></div>
<div class="r" style="left:1132px;top:358px;"><svg width="16" height="16" viewBox="0 0 16 16"><rect x="1" y="1" width="14" height="14" rx="1.5" fill="#fff" stroke="#8a8a98" stroke-width="2"/></svg></div>
<div class="r" style="left:1199px;top:353px;width:114px;height:25px;border:1px solid #0f2236;box-sizing:border-box;background:#fff"></div>
<div class="r" style="left:1295px;top:359px;"><svg width="12" height="13" viewBox="0 0 12 13"><rect x="0.5" y="2.5" width="11" height="10" fill="#fff" stroke="#0f2236" stroke-width="1"/><rect x="0" y="2" width="12" height="2.2" fill="#0f2236"/><rect x="2.5" y="0.5" width="2" height="3" rx="1" fill="#dfe6ee" stroke="#0f2236" stroke-width="1"/><rect x="7.5" y="0.5" width="2" height="3" rx="1" fill="#dfe6ee" stroke="#0f2236" stroke-width="1"/><path d="M3.5 4 V12.5 M6 4 V12.5 M8.5 4 V12.5 M0.5 6.8 H11.5 M0.5 9.6 H11.5" stroke="#0f2236" stroke-width=".9"/></svg></div>
<div class="r" style="left:1325px;top:358px;"><svg width="16" height="16" viewBox="0 0 16 16"><rect x="1" y="1" width="14" height="14" rx="1.5" fill="#fff" stroke="#8a8a98" stroke-width="2"/></svg></div>
<div class="r" style="left:1397px;top:356px;"><svg width="17" height="17" viewBox="0 0 17 17"><rect x="1.5" y="0.5" width="12" height="8" fill="#eef2f8" stroke="#a3abb8" stroke-width="1"/><rect x="3.2" y="2" width="1.3" height="1.3" fill="#93a6c2"/><rect x="5.2" y="2" width="1.3" height="1.3" fill="#93a6c2"/><rect x="7.2" y="2" width="1.3" height="1.3" fill="#93a6c2"/><rect x="9.2" y="2" width="1.3" height="1.3" fill="#93a6c2"/><rect x="11.2" y="2" width="1.3" height="1.3" fill="#93a6c2"/><rect x="3.2" y="4" width="1.3" height="1.3" fill="#93a6c2"/><rect x="5.2" y="4" width="1.3" height="1.3" fill="#93a6c2"/><rect x="7.2" y="4" width="1.3" height="1.3" fill="#93a6c2"/><rect x="9.2" y="4" width="1.3" height="1.3" fill="#93a6c2"/><rect x="11.2" y="4" width="1.3" height="1.3" fill="#93a6c2"/><rect x="3.2" y="6" width="1.3" height="1.3" fill="#93a6c2"/><rect x="5.2" y="6" width="1.3" height="1.3" fill="#93a6c2"/><rect x="7.2" y="6" width="1.3" height="1.3" fill="#93a6c2"/><rect x="9.2" y="6" width="1.3" height="1.3" fill="#93a6c2"/><rect x="11.2" y="6" width="1.3" height="1.3" fill="#93a6c2"/><rect x="10.5" y="8.5" width="5.5" height="6.5" rx="1" fill="#d8d8d8" stroke="#4a4a4a" stroke-width="1"/><rect x="12" y="10.6" width="2.6" height="2.4" fill="#fff" stroke="#444" stroke-width=".6"/><circle cx="5" cy="11.5" r="5" fill="#348812"/><path d="M2.6 11.6 L4.5 13.6 L7.9 9.3" fill="none" stroke="#fff" stroke-width="1.7"/></svg></div>
<div class="r" style="left:1425px;top:356px;"><svg width="15" height="16" viewBox="0 0 15 16"><rect x="0.75" y="0.75" width="13.5" height="14.5" rx=".6" fill="#fde56a" stroke="#eda24a" stroke-width="1.5"/><rect x="2" y="2" width="11" height="1.8" fill="#f3c543"/><rect x="2" y="4" width="11" height="1.2" fill="#fef6c0"/><path d="M1.5 2 V14.5 H13" fill="none" stroke="#fef6c0" stroke-width=".6"/><path d="M1.5 9.6 H4.8 V14.2" fill="none" stroke="#e6a35c" stroke-width="1"/></svg></div>
<div class="r" style="left:6px;top:386px;width:1441px;height:1px;background:#cdcdcd"></div>
<div class="r" style="left:16px;top:402px;"><svg width="10" height="11" viewBox="0 0 10 11"><rect x="3" y="0" width="3" height="1.3" rx=".6" fill="#111"/><rect x="0" y="1" width="9" height="1.1" fill="#111"/><path d="M1 3 H8 V9 Q8 10 7 10 H2 Q1 10 1 9 Z" fill="#111"/><rect x="1.95" y="4" width=".9" height="4.8" fill="#ddd"/><rect x="4.05" y="4" width=".9" height="4.8" fill="#ddd"/><rect x="6.15" y="4" width=".9" height="4.8" fill="#ddd"/></svg></div>
<div class="r" style="left:40px;top:401px;"><svg width="16" height="16" viewBox="0 0 16 16"><rect x="0" y="0" width="16" height="16" fill="#fff"/><rect x="4" y="0.3" width="8" height="1.9" fill="#0a1aa8"/><path d="M8 2.6 L11.8 6.3 L11.8 7.2 L9.9 7.2 L9.9 15 Q9.9 15.8 9 15.8 L7 15.8 Q6.1 15.8 6.1 15 L6.1 7.2 L4.2 7.2 L4.2 6.3 Z" fill="#2a62e6" stroke="#0b2bc0" stroke-width=".8"/><path d="M8 4.2 V14.8" stroke="#6aa8f6" stroke-width="1.1"/></svg></div>
<div class="r" style="left:64px;top:396px;width:34px;height:24px;border:1px solid #7d7d8c;border-radius:2px;box-sizing:border-box;background:#fff"></div>
<div class="t" style="left:69.30px;top:400.90px;font-size:13px;-webkit-text-stroke:0.15px currentColor;color:#0e1c30;">5</div>
<div class="t" style="left:110.50px;top:400.90px;font-size:13px;-webkit-text-stroke:0.15px currentColor;color:#0e1c30;transform:scaleX(0.9345);transform-origin:0 0;">NCDOI APPROVAL LETTER</div>
<div class="r" style="left:357px;top:400px;"><svg width="15" height="15" viewBox="0 0 15 15"><circle cx="7.5" cy="7.5" r="7.4" fill="#005fdc"/><rect x="6.1" y="2.2" width="3" height="2.4" rx=".8" fill="#fff"/><path d="M5.6 6.1 H8.7 V10.4 H9.7 V11.9 H5.5 V10.4 H6.5 V7.6 H5.6 Z" fill="#fff"/></svg></div>
<div class="r" style="left:384px;top:400px;"><svg width="16" height="16" viewBox="0 0 16 16"><rect x="1" y="1" width="14" height="14" rx="1.5" fill="#fff" stroke="#8a8a98" stroke-width="2"/></svg></div>
<div class="r" style="left:427px;top:400px;"><svg width="16" height="16" viewBox="0 0 16 16"><rect x="0" y="0" width="16" height="16" rx="2.5" fill="#005fdc"/><path d="M3.4 8.4 L6.8 11.8 L13 4.2" fill="none" stroke="#fff" stroke-width="2.2"/></svg></div>
<div class="t" style="left:485.60px;top:400.90px;font-size:13px;-webkit-text-stroke:0.15px currentColor;color:#0e1c30;transform:scaleX(0.9194);transform-origin:0 0;">No</div>
<div class="r" style="left:571px;top:400px;"><svg width="16" height="16" viewBox="0 0 16 16"><rect x="0" y="0" width="16" height="16" rx="2.5" fill="#005fdc"/><path d="M3.4 8.4 L6.8 11.8 L13 4.2" fill="none" stroke="#fff" stroke-width="2.2"/></svg></div>
<div class="t" style="left:653.40px;top:400.90px;font-size:13px;-webkit-text-stroke:0.15px currentColor;color:#0e1c30;">1</div>
<div class="t" style="left:709.70px;top:400.90px;font-size:13px;-webkit-text-stroke:0.15px currentColor;color:#0e1c30;">0</div>
<div class="t" style="left:770.60px;top:400.90px;font-size:13px;-webkit-text-stroke:0.15px currentColor;color:#0e1c30;letter-spacing:-0.042px;">Pending</div>
<div class="r" style="left:868px;top:400px;"><svg width="16" height="16" viewBox="0 0 16 16"><rect x="1" y="1" width="14" height="14" rx="1.5" fill="#fff" stroke="#8a8a98" stroke-width="2"/></svg></div>
<div class="r" style="left:934px;top:395px;width:114px;height:25px;border:1px solid #0f2236;box-sizing:border-box;background:#fff"></div>
<div class="r" style="left:1030px;top:401px;"><svg width="12" height="13" viewBox="0 0 12 13"><rect x="0.5" y="2.5" width="11" height="10" fill="#fff" stroke="#0f2236" stroke-width="1"/><rect x="0" y="2" width="12" height="2.2" fill="#0f2236"/><rect x="2.5" y="0.5" width="2" height="3" rx="1" fill="#dfe6ee" stroke="#0f2236" stroke-width="1"/><rect x="7.5" y="0.5" width="2" height="3" rx="1" fill="#dfe6ee" stroke="#0f2236" stroke-width="1"/><path d="M3.5 4 V12.5 M6 4 V12.5 M8.5 4 V12.5 M0.5 6.8 H11.5 M0.5 9.6 H11.5" stroke="#0f2236" stroke-width=".9"/></svg></div>
<div class="r" style="left:1060px;top:400px;"><svg width="16" height="16" viewBox="0 0 16 16"><rect x="1" y="1" width="14" height="14" rx="1.5" fill="#fff" stroke="#8a8a98" stroke-width="2"/></svg></div>
<div class="r" style="left:1132px;top:400px;"><svg width="16" height="16" viewBox="0 0 16 16"><rect x="1" y="1" width="14" height="14" rx="1.5" fill="#fff" stroke="#8a8a98" stroke-width="2"/></svg></div>
<div class="r" style="left:1199px;top:395px;width:114px;height:25px;border:1px solid #0f2236;box-sizing:border-box;background:#fff"></div>
<div class="r" style="left:1295px;top:401px;"><svg width="12" height="13" viewBox="0 0 12 13"><rect x="0.5" y="2.5" width="11" height="10" fill="#fff" stroke="#0f2236" stroke-width="1"/><rect x="0" y="2" width="12" height="2.2" fill="#0f2236"/><rect x="2.5" y="0.5" width="2" height="3" rx="1" fill="#dfe6ee" stroke="#0f2236" stroke-width="1"/><rect x="7.5" y="0.5" width="2" height="3" rx="1" fill="#dfe6ee" stroke="#0f2236" stroke-width="1"/><path d="M3.5 4 V12.5 M6 4 V12.5 M8.5 4 V12.5 M0.5 6.8 H11.5 M0.5 9.6 H11.5" stroke="#0f2236" stroke-width=".9"/></svg></div>
<div class="r" style="left:1325px;top:400px;"><svg width="16" height="16" viewBox="0 0 16 16"><rect x="1" y="1" width="14" height="14" rx="1.5" fill="#fff" stroke="#8a8a98" stroke-width="2"/></svg></div>
<div class="r" style="left:1397px;top:398px;"><svg width="17" height="17" viewBox="0 0 17 17"><rect x="1.5" y="0.5" width="12" height="8" fill="#eef2f8" stroke="#a3abb8" stroke-width="1"/><rect x="3.2" y="2" width="1.3" height="1.3" fill="#93a6c2"/><rect x="5.2" y="2" width="1.3" height="1.3" fill="#93a6c2"/><rect x="7.2" y="2" width="1.3" height="1.3" fill="#93a6c2"/><rect x="9.2" y="2" width="1.3" height="1.3" fill="#93a6c2"/><rect x="11.2" y="2" width="1.3" height="1.3" fill="#93a6c2"/><rect x="3.2" y="4" width="1.3" height="1.3" fill="#93a6c2"/><rect x="5.2" y="4" width="1.3" height="1.3" fill="#93a6c2"/><rect x="7.2" y="4" width="1.3" height="1.3" fill="#93a6c2"/><rect x="9.2" y="4" width="1.3" height="1.3" fill="#93a6c2"/><rect x="11.2" y="4" width="1.3" height="1.3" fill="#93a6c2"/><rect x="3.2" y="6" width="1.3" height="1.3" fill="#93a6c2"/><rect x="5.2" y="6" width="1.3" height="1.3" fill="#93a6c2"/><rect x="7.2" y="6" width="1.3" height="1.3" fill="#93a6c2"/><rect x="9.2" y="6" width="1.3" height="1.3" fill="#93a6c2"/><rect x="11.2" y="6" width="1.3" height="1.3" fill="#93a6c2"/><rect x="10.5" y="8.5" width="5.5" height="6.5" rx="1" fill="#d8d8d8" stroke="#4a4a4a" stroke-width="1"/><rect x="12" y="10.6" width="2.6" height="2.4" fill="#fff" stroke="#444" stroke-width=".6"/><circle cx="5" cy="11.5" r="5" fill="#348812"/><path d="M2.6 11.6 L4.5 13.6 L7.9 9.3" fill="none" stroke="#fff" stroke-width="1.7"/></svg></div>
<div class="r" style="left:1425px;top:398px;"><svg width="15" height="16" viewBox="0 0 15 16"><rect x="0.75" y="0.75" width="13.5" height="14.5" rx=".6" fill="#fde56a" stroke="#eda24a" stroke-width="1.5"/><rect x="2" y="2" width="11" height="1.8" fill="#f3c543"/><rect x="2" y="4" width="11" height="1.2" fill="#fef6c0"/><path d="M1.5 2 V14.5 H13" fill="none" stroke="#fef6c0" stroke-width=".6"/><path d="M1.5 9.6 H4.8 V14.2" fill="none" stroke="#e6a35c" stroke-width="1"/></svg></div>
<div class="r" style="left:6px;top:429px;width:1441px;height:41px;background:#f2f4f4"></div>
<div class="r" style="left:6px;top:428px;width:1441px;height:1px;background:#cdcdcd"></div>
<div class="r" style="left:16px;top:444px;"><svg width="10" height="11" viewBox="0 0 10 11"><rect x="3" y="0" width="3" height="1.3" rx=".6" fill="#111"/><rect x="0" y="1" width="9" height="1.1" fill="#111"/><path d="M1 3 H8 V9 Q8 10 7 10 H2 Q1 10 1 9 Z" fill="#111"/><rect x="1.95" y="4" width=".9" height="4.8" fill="#ddd"/><rect x="4.05" y="4" width=".9" height="4.8" fill="#ddd"/><rect x="6.15" y="4" width=".9" height="4.8" fill="#ddd"/></svg></div>
<div class="r" style="left:40px;top:443px;"><svg width="16" height="16" viewBox="0 0 16 16"><rect x="0" y="0" width="16" height="16" fill="#fff"/><rect x="4" y="0.3" width="8" height="1.9" fill="#0a1aa8"/><path d="M8 2.6 L11.8 6.3 L11.8 7.2 L9.9 7.2 L9.9 15 Q9.9 15.8 9 15.8 L7 15.8 Q6.1 15.8 6.1 15 L6.1 7.2 L4.2 7.2 L4.2 6.3 Z" fill="#2a62e6" stroke="#0b2bc0" stroke-width=".8"/><path d="M8 4.2 V14.8" stroke="#6aa8f6" stroke-width="1.1"/></svg></div>
<div class="r" style="left:64px;top:438px;width:34px;height:24px;border:1px solid #7d7d8c;border-radius:2px;box-sizing:border-box;background:#fff"></div>
<div class="t" style="left:69.30px;top:442.90px;font-size:13px;-webkit-text-stroke:0.15px currentColor;color:#0e1c30;">6</div>
<div class="t" style="left:110.50px;top:442.90px;font-size:13px;-webkit-text-stroke:0.15px currentColor;color:#0e1c30;transform:scaleX(0.9445);transform-origin:0 0;">DHHS</div>
<div class="r" style="left:357px;top:442px;"><svg width="15" height="15" viewBox="0 0 15 15"><circle cx="7.5" cy="7.5" r="7.4" fill="#005fdc"/><rect x="6.1" y="2.2" width="3" height="2.4" rx=".8" fill="#fff"/><path d="M5.6 6.1 H8.7 V10.4 H9.7 V11.9 H5.5 V10.4 H6.5 V7.6 H5.6 Z" fill="#fff"/></svg></div>
<div class="r" style="left:384px;top:442px;"><svg width="16" height="16" viewBox="0 0 16 16"><rect x="1" y="1" width="14" height="14" rx="1.5" fill="#fff" stroke="#8a8a98" stroke-width="2"/></svg></div>
<div class="r" style="left:427px;top:442px;"><svg width="16" height="16" viewBox="0 0 16 16"><rect x="0" y="0" width="16" height="16" rx="2.5" fill="#005fdc"/><path d="M3.4 8.4 L6.8 11.8 L13 4.2" fill="none" stroke="#fff" stroke-width="2.2"/></svg></div>
<div class="t" style="left:485.60px;top:442.90px;font-size:13px;-webkit-text-stroke:0.15px currentColor;color:#0e1c30;transform:scaleX(0.9194);transform-origin:0 0;">No</div>
<div class="r" style="left:571px;top:442px;"><svg width="16" height="16" viewBox="0 0 16 16"><rect x="0" y="0" width="16" height="16" rx="2.5" fill="#005fdc"/><path d="M3.4 8.4 L6.8 11.8 L13 4.2" fill="none" stroke="#fff" stroke-width="2.2"/></svg></div>
<div class="t" style="left:653.40px;top:442.90px;font-size:13px;-webkit-text-stroke:0.15px currentColor;color:#0e1c30;">1</div>
<div class="t" style="left:709.70px;top:442.90px;font-size:13px;-webkit-text-stroke:0.15px currentColor;color:#0e1c30;">0</div>
<div class="t" style="left:770.60px;top:442.90px;font-size:13px;-webkit-text-stroke:0.15px currentColor;color:#0e1c30;letter-spacing:-0.042px;">Pending</div>
<div class="r" style="left:868px;top:442px;"><svg width="16" height="16" viewBox="0 0 16 16"><rect x="1" y="1" width="14" height="14" rx="1.5" fill="#fff" stroke="#8a8a98" stroke-width="2"/></svg></div>
<div class="r" style="left:934px;top:437px;width:114px;height:25px;border:1px solid #0f2236;box-sizing:border-box;background:#fff"></div>
<div class="r" style="left:1030px;top:443px;"><svg width="12" height="13" viewBox="0 0 12 13"><rect x="0.5" y="2.5" width="11" height="10" fill="#fff" stroke="#0f2236" stroke-width="1"/><rect x="0" y="2" width="12" height="2.2" fill="#0f2236"/><rect x="2.5" y="0.5" width="2" height="3" rx="1" fill="#dfe6ee" stroke="#0f2236" stroke-width="1"/><rect x="7.5" y="0.5" width="2" height="3" rx="1" fill="#dfe6ee" stroke="#0f2236" stroke-width="1"/><path d="M3.5 4 V12.5 M6 4 V12.5 M8.5 4 V12.5 M0.5 6.8 H11.5 M0.5 9.6 H11.5" stroke="#0f2236" stroke-width=".9"/></svg></div>
<div class="r" style="left:1060px;top:442px;"><svg width="16" height="16" viewBox="0 0 16 16"><rect x="1" y="1" width="14" height="14" rx="1.5" fill="#fff" stroke="#8a8a98" stroke-width="2"/></svg></div>
<div class="r" style="left:1132px;top:442px;"><svg width="16" height="16" viewBox="0 0 16 16"><rect x="1" y="1" width="14" height="14" rx="1.5" fill="#fff" stroke="#8a8a98" stroke-width="2"/></svg></div>
<div class="r" style="left:1199px;top:437px;width:114px;height:25px;border:1px solid #0f2236;box-sizing:border-box;background:#fff"></div>
<div class="r" style="left:1295px;top:443px;"><svg width="12" height="13" viewBox="0 0 12 13"><rect x="0.5" y="2.5" width="11" height="10" fill="#fff" stroke="#0f2236" stroke-width="1"/><rect x="0" y="2" width="12" height="2.2" fill="#0f2236"/><rect x="2.5" y="0.5" width="2" height="3" rx="1" fill="#dfe6ee" stroke="#0f2236" stroke-width="1"/><rect x="7.5" y="0.5" width="2" height="3" rx="1" fill="#dfe6ee" stroke="#0f2236" stroke-width="1"/><path d="M3.5 4 V12.5 M6 4 V12.5 M8.5 4 V12.5 M0.5 6.8 H11.5 M0.5 9.6 H11.5" stroke="#0f2236" stroke-width=".9"/></svg></div>
<div class="r" style="left:1325px;top:442px;"><svg width="16" height="16" viewBox="0 0 16 16"><rect x="1" y="1" width="14" height="14" rx="1.5" fill="#fff" stroke="#8a8a98" stroke-width="2"/></svg></div>
<div class="r" style="left:1397px;top:440px;"><svg width="17" height="17" viewBox="0 0 17 17"><rect x="1.5" y="0.5" width="12" height="8" fill="#eef2f8" stroke="#a3abb8" stroke-width="1"/><rect x="3.2" y="2" width="1.3" height="1.3" fill="#93a6c2"/><rect x="5.2" y="2" width="1.3" height="1.3" fill="#93a6c2"/><rect x="7.2" y="2" width="1.3" height="1.3" fill="#93a6c2"/><rect x="9.2" y="2" width="1.3" height="1.3" fill="#93a6c2"/><rect x="11.2" y="2" width="1.3" height="1.3" fill="#93a6c2"/><rect x="3.2" y="4" width="1.3" height="1.3" fill="#93a6c2"/><rect x="5.2" y="4" width="1.3" height="1.3" fill="#93a6c2"/><rect x="7.2" y="4" width="1.3" height="1.3" fill="#93a6c2"/><rect x="9.2" y="4" width="1.3" height="1.3" fill="#93a6c2"/><rect x="11.2" y="4" width="1.3" height="1.3" fill="#93a6c2"/><rect x="3.2" y="6" width="1.3" height="1.3" fill="#93a6c2"/><rect x="5.2" y="6" width="1.3" height="1.3" fill="#93a6c2"/><rect x="7.2" y="6" width="1.3" height="1.3" fill="#93a6c2"/><rect x="9.2" y="6" width="1.3" height="1.3" fill="#93a6c2"/><rect x="11.2" y="6" width="1.3" height="1.3" fill="#93a6c2"/><rect x="10.5" y="8.5" width="5.5" height="6.5" rx="1" fill="#d8d8d8" stroke="#4a4a4a" stroke-width="1"/><rect x="12" y="10.6" width="2.6" height="2.4" fill="#fff" stroke="#444" stroke-width=".6"/><circle cx="5" cy="11.5" r="5" fill="#348812"/><path d="M2.6 11.6 L4.5 13.6 L7.9 9.3" fill="none" stroke="#fff" stroke-width="1.7"/></svg></div>
<div class="r" style="left:1425px;top:440px;"><svg width="15" height="16" viewBox="0 0 15 16"><rect x="0.75" y="0.75" width="13.5" height="14.5" rx=".6" fill="#fde56a" stroke="#eda24a" stroke-width="1.5"/><rect x="2" y="2" width="11" height="1.8" fill="#f3c543"/><rect x="2" y="4" width="11" height="1.2" fill="#fef6c0"/><path d="M1.5 2 V14.5 H13" fill="none" stroke="#fef6c0" stroke-width=".6"/><path d="M1.5 9.6 H4.8 V14.2" fill="none" stroke="#e6a35c" stroke-width="1"/></svg></div>
<div class="r" style="left:6px;top:470px;width:1441px;height:1px;background:#cdcdcd"></div>
<div class="r" style="left:16px;top:486px;"><svg width="10" height="11" viewBox="0 0 10 11"><rect x="3" y="0" width="3" height="1.3" rx=".6" fill="#111"/><rect x="0" y="1" width="9" height="1.1" fill="#111"/><path d="M1 3 H8 V9 Q8 10 7 10 H2 Q1 10 1 9 Z" fill="#111"/><rect x="1.95" y="4" width=".9" height="4.8" fill="#ddd"/><rect x="4.05" y="4" width=".9" height="4.8" fill="#ddd"/><rect x="6.15" y="4" width=".9" height="4.8" fill="#ddd"/></svg></div>
<div class="r" style="left:40px;top:485px;"><svg width="16" height="16" viewBox="0 0 16 16"><rect x="0" y="0" width="16" height="16" fill="#fff"/><rect x="4" y="0.3" width="8" height="1.9" fill="#0a1aa8"/><path d="M8 2.6 L11.8 6.3 L11.8 7.2 L9.9 7.2 L9.9 15 Q9.9 15.8 9 15.8 L7 15.8 Q6.1 15.8 6.1 15 L6.1 7.2 L4.2 7.2 L4.2 6.3 Z" fill="#2a62e6" stroke="#0b2bc0" stroke-width=".8"/><path d="M8 4.2 V14.8" stroke="#6aa8f6" stroke-width="1.1"/></svg></div>
<div class="r" style="left:64px;top:480px;width:34px;height:24px;border:1px solid #7d7d8c;border-radius:2px;box-sizing:border-box;background:#fff"></div>
<div class="t" style="left:69.30px;top:484.90px;font-size:13px;-webkit-text-stroke:0.15px currentColor;color:#0e1c30;">7</div>
<div class="t" style="left:110.50px;top:484.90px;font-size:13px;-webkit-text-stroke:0.15px currentColor;color:#0e1c30;transform:scaleX(0.9430);transform-origin:0 0;">STATEMENT OF SPECIAL INSPECTIONS</div>
<div class="r" style="left:357px;top:484px;"><svg width="15" height="15" viewBox="0 0 15 15"><circle cx="7.5" cy="7.5" r="7.4" fill="#005fdc"/><rect x="6.1" y="2.2" width="3" height="2.4" rx=".8" fill="#fff"/><path d="M5.6 6.1 H8.7 V10.4 H9.7 V11.9 H5.5 V10.4 H6.5 V7.6 H5.6 Z" fill="#fff"/></svg></div>
<div class="r" style="left:384px;top:484px;"><svg width="16" height="16" viewBox="0 0 16 16"><rect x="1" y="1" width="14" height="14" rx="1.5" fill="#fff" stroke="#8a8a98" stroke-width="2"/></svg></div>
<div class="r" style="left:427px;top:484px;"><svg width="16" height="16" viewBox="0 0 16 16"><rect x="0" y="0" width="16" height="16" rx="2.5" fill="#005fdc"/><path d="M3.4 8.4 L6.8 11.8 L13 4.2" fill="none" stroke="#fff" stroke-width="2.2"/></svg></div>
<div class="t" style="left:485.60px;top:484.90px;font-size:13px;-webkit-text-stroke:0.15px currentColor;color:#0e1c30;transform:scaleX(0.9194);transform-origin:0 0;">No</div>
<div class="r" style="left:571px;top:484px;"><svg width="16" height="16" viewBox="0 0 16 16"><rect x="0" y="0" width="16" height="16" rx="2.5" fill="#005fdc"/><path d="M3.4 8.4 L6.8 11.8 L13 4.2" fill="none" stroke="#fff" stroke-width="2.2"/></svg></div>
<div class="t" style="left:653.40px;top:484.90px;font-size:13px;-webkit-text-stroke:0.15px currentColor;color:#0e1c30;">1</div>
<div class="t" style="left:709.70px;top:484.90px;font-size:13px;-webkit-text-stroke:0.15px currentColor;color:#0e1c30;">0</div>
<div class="t" style="left:770.60px;top:484.90px;font-size:13px;-webkit-text-stroke:0.15px currentColor;color:#0e1c30;letter-spacing:-0.042px;">Pending</div>
<div class="r" style="left:868px;top:484px;"><svg width="16" height="16" viewBox="0 0 16 16"><rect x="1" y="1" width="14" height="14" rx="1.5" fill="#fff" stroke="#8a8a98" stroke-width="2"/></svg></div>
<div class="r" style="left:934px;top:479px;width:114px;height:25px;border:1px solid #0f2236;box-sizing:border-box;background:#fff"></div>
<div class="r" style="left:1030px;top:485px;"><svg width="12" height="13" viewBox="0 0 12 13"><rect x="0.5" y="2.5" width="11" height="10" fill="#fff" stroke="#0f2236" stroke-width="1"/><rect x="0" y="2" width="12" height="2.2" fill="#0f2236"/><rect x="2.5" y="0.5" width="2" height="3" rx="1" fill="#dfe6ee" stroke="#0f2236" stroke-width="1"/><rect x="7.5" y="0.5" width="2" height="3" rx="1" fill="#dfe6ee" stroke="#0f2236" stroke-width="1"/><path d="M3.5 4 V12.5 M6 4 V12.5 M8.5 4 V12.5 M0.5 6.8 H11.5 M0.5 9.6 H11.5" stroke="#0f2236" stroke-width=".9"/></svg></div>
<div class="r" style="left:1060px;top:484px;"><svg width="16" height="16" viewBox="0 0 16 16"><rect x="1" y="1" width="14" height="14" rx="1.5" fill="#fff" stroke="#8a8a98" stroke-width="2"/></svg></div>
<div class="r" style="left:1132px;top:484px;"><svg width="16" height="16" viewBox="0 0 16 16"><rect x="1" y="1" width="14" height="14" rx="1.5" fill="#fff" stroke="#8a8a98" stroke-width="2"/></svg></div>
<div class="r" style="left:1199px;top:479px;width:114px;height:25px;border:1px solid #0f2236;box-sizing:border-box;background:#fff"></div>
<div class="r" style="left:1295px;top:485px;"><svg width="12" height="13" viewBox="0 0 12 13"><rect x="0.5" y="2.5" width="11" height="10" fill="#fff" stroke="#0f2236" stroke-width="1"/><rect x="0" y="2" width="12" height="2.2" fill="#0f2236"/><rect x="2.5" y="0.5" width="2" height="3" rx="1" fill="#dfe6ee" stroke="#0f2236" stroke-width="1"/><rect x="7.5" y="0.5" width="2" height="3" rx="1" fill="#dfe6ee" stroke="#0f2236" stroke-width="1"/><path d="M3.5 4 V12.5 M6 4 V12.5 M8.5 4 V12.5 M0.5 6.8 H11.5 M0.5 9.6 H11.5" stroke="#0f2236" stroke-width=".9"/></svg></div>
<div class="r" style="left:1325px;top:484px;"><svg width="16" height="16" viewBox="0 0 16 16"><rect x="1" y="1" width="14" height="14" rx="1.5" fill="#fff" stroke="#8a8a98" stroke-width="2"/></svg></div>
<div class="r" style="left:1397px;top:482px;"><svg width="17" height="17" viewBox="0 0 17 17"><rect x="1.5" y="0.5" width="12" height="8" fill="#eef2f8" stroke="#a3abb8" stroke-width="1"/><rect x="3.2" y="2" width="1.3" height="1.3" fill="#93a6c2"/><rect x="5.2" y="2" width="1.3" height="1.3" fill="#93a6c2"/><rect x="7.2" y="2" width="1.3" height="1.3" fill="#93a6c2"/><rect x="9.2" y="2" width="1.3" height="1.3" fill="#93a6c2"/><rect x="11.2" y="2" width="1.3" height="1.3" fill="#93a6c2"/><rect x="3.2" y="4" width="1.3" height="1.3" fill="#93a6c2"/><rect x="5.2" y="4" width="1.3" height="1.3" fill="#93a6c2"/><rect x="7.2" y="4" width="1.3" height="1.3" fill="#93a6c2"/><rect x="9.2" y="4" width="1.3" height="1.3" fill="#93a6c2"/><rect x="11.2" y="4" width="1.3" height="1.3" fill="#93a6c2"/><rect x="3.2" y="6" width="1.3" height="1.3" fill="#93a6c2"/><rect x="5.2" y="6" width="1.3" height="1.3" fill="#93a6c2"/><rect x="7.2" y="6" width="1.3" height="1.3" fill="#93a6c2"/><rect x="9.2" y="6" width="1.3" height="1.3" fill="#93a6c2"/><rect x="11.2" y="6" width="1.3" height="1.3" fill="#93a6c2"/><rect x="10.5" y="8.5" width="5.5" height="6.5" rx="1" fill="#d8d8d8" stroke="#4a4a4a" stroke-width="1"/><rect x="12" y="10.6" width="2.6" height="2.4" fill="#fff" stroke="#444" stroke-width=".6"/><circle cx="5" cy="11.5" r="5" fill="#348812"/><path d="M2.6 11.6 L4.5 13.6 L7.9 9.3" fill="none" stroke="#fff" stroke-width="1.7"/></svg></div>
<div class="r" style="left:1425px;top:482px;"><svg width="15" height="16" viewBox="0 0 15 16"><rect x="0.75" y="0.75" width="13.5" height="14.5" rx=".6" fill="#fde56a" stroke="#eda24a" stroke-width="1.5"/><rect x="2" y="2" width="11" height="1.8" fill="#f3c543"/><rect x="2" y="4" width="11" height="1.2" fill="#fef6c0"/><path d="M1.5 2 V14.5 H13" fill="none" stroke="#fef6c0" stroke-width=".6"/><path d="M1.5 9.6 H4.8 V14.2" fill="none" stroke="#e6a35c" stroke-width="1"/></svg></div>
<div class="r" style="left:6px;top:513px;width:1441px;height:41px;background:#f2f4f4"></div>
<div class="r" style="left:6px;top:512px;width:1441px;height:1px;background:#cdcdcd"></div>
<div class="r" style="left:16px;top:528px;"><svg width="10" height="11" viewBox="0 0 10 11"><rect x="3" y="0" width="3" height="1.3" rx=".6" fill="#111"/><rect x="0" y="1" width="9" height="1.1" fill="#111"/><path d="M1 3 H8 V9 Q8 10 7 10 H2 Q1 10 1 9 Z" fill="#111"/><rect x="1.95" y="4" width=".9" height="4.8" fill="#ddd"/><rect x="4.05" y="4" width=".9" height="4.8" fill="#ddd"/><rect x="6.15" y="4" width=".9" height="4.8" fill="#ddd"/></svg></div>
<div class="r" style="left:40px;top:527px;"><svg width="16" height="16" viewBox="0 0 16 16"><rect x="0" y="0" width="16" height="16" fill="#fff"/><rect x="4" y="0.3" width="8" height="1.9" fill="#0a1aa8"/><path d="M8 2.6 L11.8 6.3 L11.8 7.2 L9.9 7.2 L9.9 15 Q9.9 15.8 9 15.8 L7 15.8 Q6.1 15.8 6.1 15 L6.1 7.2 L4.2 7.2 L4.2 6.3 Z" fill="#2a62e6" stroke="#0b2bc0" stroke-width=".8"/><path d="M8 4.2 V14.8" stroke="#6aa8f6" stroke-width="1.1"/></svg></div>
<div class="r" style="left:64px;top:522px;width:34px;height:24px;border:1px solid #7d7d8c;border-radius:2px;box-sizing:border-box;background:#fff"></div>
<div class="t" style="left:69.30px;top:526.90px;font-size:13px;-webkit-text-stroke:0.15px currentColor;color:#0e1c30;">8</div>
<div class="t" style="left:110.50px;top:526.90px;font-size:13px;-webkit-text-stroke:0.15px currentColor;color:#0e1c30;transform:scaleX(0.9506);transform-origin:0 0;">CIVIL PLANS AND DRAWINGS</div>
<div class="r" style="left:357px;top:526px;"><svg width="15" height="15" viewBox="0 0 15 15"><circle cx="7.5" cy="7.5" r="7.4" fill="#005fdc"/><rect x="6.1" y="2.2" width="3" height="2.4" rx=".8" fill="#fff"/><path d="M5.6 6.1 H8.7 V10.4 H9.7 V11.9 H5.5 V10.4 H6.5 V7.6 H5.6 Z" fill="#fff"/></svg></div>
<div class="r" style="left:384px;top:526px;"><svg width="16" height="16" viewBox="0 0 16 16"><rect x="1" y="1" width="14" height="14" rx="1.5" fill="#fff" stroke="#8a8a98" stroke-width="2"/></svg></div>
<div class="r" style="left:427px;top:526px;"><svg width="16" height="16" viewBox="0 0 16 16"><rect x="0" y="0" width="16" height="16" rx="2.5" fill="#005fdc"/><path d="M3.4 8.4 L6.8 11.8 L13 4.2" fill="none" stroke="#fff" stroke-width="2.2"/></svg></div>
<div class="t" style="left:485.60px;top:526.90px;font-size:13px;-webkit-text-stroke:0.15px currentColor;color:#0e1c30;transform:scaleX(0.9194);transform-origin:0 0;">No</div>
<div class="r" style="left:571px;top:526px;"><svg width="16" height="16" viewBox="0 0 16 16"><rect x="0" y="0" width="16" height="16" rx="2.5" fill="#005fdc"/><path d="M3.4 8.4 L6.8 11.8 L13 4.2" fill="none" stroke="#fff" stroke-width="2.2"/></svg></div>
<div class="t" style="left:653.40px;top:526.90px;font-size:13px;-webkit-text-stroke:0.15px currentColor;color:#0e1c30;">1</div>
<div class="t" style="left:709.70px;top:526.90px;font-size:13px;-webkit-text-stroke:0.15px currentColor;color:#0e1c30;">0</div>
<div class="t" style="left:770.60px;top:526.90px;font-size:13px;-webkit-text-stroke:0.15px currentColor;color:#0e1c30;letter-spacing:-0.042px;">Pending</div>
<div class="r" style="left:868px;top:526px;"><svg width="16" height="16" viewBox="0 0 16 16"><rect x="1" y="1" width="14" height="14" rx="1.5" fill="#fff" stroke="#8a8a98" stroke-width="2"/></svg></div>
<div class="r" style="left:934px;top:521px;width:114px;height:25px;border:1px solid #0f2236;box-sizing:border-box;background:#fff"></div>
<div class="r" style="left:1030px;top:527px;"><svg width="12" height="13" viewBox="0 0 12 13"><rect x="0.5" y="2.5" width="11" height="10" fill="#fff" stroke="#0f2236" stroke-width="1"/><rect x="0" y="2" width="12" height="2.2" fill="#0f2236"/><rect x="2.5" y="0.5" width="2" height="3" rx="1" fill="#dfe6ee" stroke="#0f2236" stroke-width="1"/><rect x="7.5" y="0.5" width="2" height="3" rx="1" fill="#dfe6ee" stroke="#0f2236" stroke-width="1"/><path d="M3.5 4 V12.5 M6 4 V12.5 M8.5 4 V12.5 M0.5 6.8 H11.5 M0.5 9.6 H11.5" stroke="#0f2236" stroke-width=".9"/></svg></div>
<div class="r" style="left:1060px;top:526px;"><svg width="16" height="16" viewBox="0 0 16 16"><rect x="1" y="1" width="14" height="14" rx="1.5" fill="#fff" stroke="#8a8a98" stroke-width="2"/></svg></div>
<div class="r" style="left:1132px;top:526px;"><svg width="16" height="16" viewBox="0 0 16 16"><rect x="1" y="1" width="14" height="14" rx="1.5" fill="#fff" stroke="#8a8a98" stroke-width="2"/></svg></div>
<div class="r" style="left:1199px;top:521px;width:114px;height:25px;border:1px solid #0f2236;box-sizing:border-box;background:#fff"></div>
<div class="r" style="left:1295px;top:527px;"><svg width="12" height="13" viewBox="0 0 12 13"><rect x="0.5" y="2.5" width="11" height="10" fill="#fff" stroke="#0f2236" stroke-width="1"/><rect x="0" y="2" width="12" height="2.2" fill="#0f2236"/><rect x="2.5" y="0.5" width="2" height="3" rx="1" fill="#dfe6ee" stroke="#0f2236" stroke-width="1"/><rect x="7.5" y="0.5" width="2" height="3" rx="1" fill="#dfe6ee" stroke="#0f2236" stroke-width="1"/><path d="M3.5 4 V12.5 M6 4 V12.5 M8.5 4 V12.5 M0.5 6.8 H11.5 M0.5 9.6 H11.5" stroke="#0f2236" stroke-width=".9"/></svg></div>
<div class="r" style="left:1325px;top:526px;"><svg width="16" height="16" viewBox="0 0 16 16"><rect x="1" y="1" width="14" height="14" rx="1.5" fill="#fff" stroke="#8a8a98" stroke-width="2"/></svg></div>
<div class="r" style="left:1397px;top:524px;"><svg width="17" height="17" viewBox="0 0 17 17"><rect x="1.5" y="0.5" width="12" height="8" fill="#eef2f8" stroke="#a3abb8" stroke-width="1"/><rect x="3.2" y="2" width="1.3" height="1.3" fill="#93a6c2"/><rect x="5.2" y="2" width="1.3" height="1.3" fill="#93a6c2"/><rect x="7.2" y="2" width="1.3" height="1.3" fill="#93a6c2"/><rect x="9.2" y="2" width="1.3" height="1.3" fill="#93a6c2"/><rect x="11.2" y="2" width="1.3" height="1.3" fill="#93a6c2"/><rect x="3.2" y="4" width="1.3" height="1.3" fill="#93a6c2"/><rect x="5.2" y="4" width="1.3" height="1.3" fill="#93a6c2"/><rect x="7.2" y="4" width="1.3" height="1.3" fill="#93a6c2"/><rect x="9.2" y="4" width="1.3" height="1.3" fill="#93a6c2"/><rect x="11.2" y="4" width="1.3" height="1.3" fill="#93a6c2"/><rect x="3.2" y="6" width="1.3" height="1.3" fill="#93a6c2"/><rect x="5.2" y="6" width="1.3" height="1.3" fill="#93a6c2"/><rect x="7.2" y="6" width="1.3" height="1.3" fill="#93a6c2"/><rect x="9.2" y="6" width="1.3" height="1.3" fill="#93a6c2"/><rect x="11.2" y="6" width="1.3" height="1.3" fill="#93a6c2"/><rect x="10.5" y="8.5" width="5.5" height="6.5" rx="1" fill="#d8d8d8" stroke="#4a4a4a" stroke-width="1"/><rect x="12" y="10.6" width="2.6" height="2.4" fill="#fff" stroke="#444" stroke-width=".6"/><circle cx="5" cy="11.5" r="5" fill="#348812"/><path d="M2.6 11.6 L4.5 13.6 L7.9 9.3" fill="none" stroke="#fff" stroke-width="1.7"/></svg></div>
<div class="r" style="left:1425px;top:524px;"><svg width="15" height="16" viewBox="0 0 15 16"><rect x="0.75" y="0.75" width="13.5" height="14.5" rx=".6" fill="#fde56a" stroke="#eda24a" stroke-width="1.5"/><rect x="2" y="2" width="11" height="1.8" fill="#f3c543"/><rect x="2" y="4" width="11" height="1.2" fill="#fef6c0"/><path d="M1.5 2 V14.5 H13" fill="none" stroke="#fef6c0" stroke-width=".6"/><path d="M1.5 9.6 H4.8 V14.2" fill="none" stroke="#e6a35c" stroke-width="1"/></svg></div>
<div class="r" style="left:6px;top:554px;width:1441px;height:1px;background:#cdcdcd"></div>
<div class="r" style="left:16px;top:570px;"><svg width="10" height="11" viewBox="0 0 10 11"><rect x="3" y="0" width="3" height="1.3" rx=".6" fill="#111"/><rect x="0" y="1" width="9" height="1.1" fill="#111"/><path d="M1 3 H8 V9 Q8 10 7 10 H2 Q1 10 1 9 Z" fill="#111"/><rect x="1.95" y="4" width=".9" height="4.8" fill="#ddd"/><rect x="4.05" y="4" width=".9" height="4.8" fill="#ddd"/><rect x="6.15" y="4" width=".9" height="4.8" fill="#ddd"/></svg></div>
<div class="r" style="left:40px;top:569px;"><svg width="16" height="16" viewBox="0 0 16 16"><rect x="0" y="0" width="16" height="16" fill="#fff"/><rect x="4" y="0.3" width="8" height="1.9" fill="#0a1aa8"/><path d="M8 2.6 L11.8 6.3 L11.8 7.2 L9.9 7.2 L9.9 15 Q9.9 15.8 9 15.8 L7 15.8 Q6.1 15.8 6.1 15 L6.1 7.2 L4.2 7.2 L4.2 6.3 Z" fill="#2a62e6" stroke="#0b2bc0" stroke-width=".8"/><path d="M8 4.2 V14.8" stroke="#6aa8f6" stroke-width="1.1"/></svg></div>
<div class="r" style="left:64px;top:564px;width:34px;height:24px;border:1px solid #7d7d8c;border-radius:2px;box-sizing:border-box;background:#fff"></div>
<div class="t" style="left:69.30px;top:568.90px;font-size:13px;-webkit-text-stroke:0.15px currentColor;color:#0e1c30;">9</div>
<div class="t" style="left:110.50px;top:568.90px;font-size:13px;-webkit-text-stroke:0.15px currentColor;color:#0e1c30;transform:scaleX(0.9430);transform-origin:0 0;">ELEVATIONS</div>
<div class="r" style="left:357px;top:568px;"><svg width="15" height="15" viewBox="0 0 15 15"><circle cx="7.5" cy="7.5" r="7.4" fill="#005fdc"/><rect x="6.1" y="2.2" width="3" height="2.4" rx=".8" fill="#fff"/><path d="M5.6 6.1 H8.7 V10.4 H9.7 V11.9 H5.5 V10.4 H6.5 V7.6 H5.6 Z" fill="#fff"/></svg></div>
<div class="r" style="left:384px;top:568px;"><svg width="16" height="16" viewBox="0 0 16 16"><rect x="1" y="1" width="14" height="14" rx="1.5" fill="#fff" stroke="#8a8a98" stroke-width="2"/></svg></div>
<div class="r" style="left:427px;top:568px;"><svg width="16" height="16" viewBox="0 0 16 16"><rect x="0" y="0" width="16" height="16" rx="2.5" fill="#005fdc"/><path d="M3.4 8.4 L6.8 11.8 L13 4.2" fill="none" stroke="#fff" stroke-width="2.2"/></svg></div>
<div class="t" style="left:485.60px;top:568.90px;font-size:13px;-webkit-text-stroke:0.15px currentColor;color:#0e1c30;transform:scaleX(0.9194);transform-origin:0 0;">No</div>
<div class="r" style="left:571px;top:568px;"><svg width="16" height="16" viewBox="0 0 16 16"><rect x="0" y="0" width="16" height="16" rx="2.5" fill="#005fdc"/><path d="M3.4 8.4 L6.8 11.8 L13 4.2" fill="none" stroke="#fff" stroke-width="2.2"/></svg></div>
<div class="t" style="left:653.40px;top:568.90px;font-size:13px;-webkit-text-stroke:0.15px currentColor;color:#0e1c30;">1</div>
<div class="t" style="left:709.70px;top:568.90px;font-size:13px;-webkit-text-stroke:0.15px currentColor;color:#0e1c30;">0</div>
<div class="t" style="left:770.60px;top:568.90px;font-size:13px;-webkit-text-stroke:0.15px currentColor;color:#0e1c30;letter-spacing:-0.042px;">Pending</div>
<div class="r" style="left:868px;top:568px;"><svg width="16" height="16" viewBox="0 0 16 16"><rect x="1" y="1" width="14" height="14" rx="1.5" fill="#fff" stroke="#8a8a98" stroke-width="2"/></svg></div>
<div class="r" style="left:934px;top:563px;width:114px;height:25px;border:1px solid #0f2236;box-sizing:border-box;background:#fff"></div>
<div class="r" style="left:1030px;top:569px;"><svg width="12" height="13" viewBox="0 0 12 13"><rect x="0.5" y="2.5" width="11" height="10" fill="#fff" stroke="#0f2236" stroke-width="1"/><rect x="0" y="2" width="12" height="2.2" fill="#0f2236"/><rect x="2.5" y="0.5" width="2" height="3" rx="1" fill="#dfe6ee" stroke="#0f2236" stroke-width="1"/><rect x="7.5" y="0.5" width="2" height="3" rx="1" fill="#dfe6ee" stroke="#0f2236" stroke-width="1"/><path d="M3.5 4 V12.5 M6 4 V12.5 M8.5 4 V12.5 M0.5 6.8 H11.5 M0.5 9.6 H11.5" stroke="#0f2236" stroke-width=".9"/></svg></div>
<div class="r" style="left:1060px;top:568px;"><svg width="16" height="16" viewBox="0 0 16 16"><rect x="1" y="1" width="14" height="14" rx="1.5" fill="#fff" stroke="#8a8a98" stroke-width="2"/></svg></div>
<div class="r" style="left:1132px;top:568px;"><svg width="16" height="16" viewBox="0 0 16 16"><rect x="1" y="1" width="14" height="14" rx="1.5" fill="#fff" stroke="#8a8a98" stroke-width="2"/></svg></div>
<div class="r" style="left:1199px;top:563px;width:114px;height:25px;border:1px solid #0f2236;box-sizing:border-box;background:#fff"></div>
<div class="r" style="left:1295px;top:569px;"><svg width="12" height="13" viewBox="0 0 12 13"><rect x="0.5" y="2.5" width="11" height="10" fill="#fff" stroke="#0f2236" stroke-width="1"/><rect x="0" y="2" width="12" height="2.2" fill="#0f2236"/><rect x="2.5" y="0.5" width="2" height="3" rx="1" fill="#dfe6ee" stroke="#0f2236" stroke-width="1"/><rect x="7.5" y="0.5" width="2" height="3" rx="1" fill="#dfe6ee" stroke="#0f2236" stroke-width="1"/><path d="M3.5 4 V12.5 M6 4 V12.5 M8.5 4 V12.5 M0.5 6.8 H11.5 M0.5 9.6 H11.5" stroke="#0f2236" stroke-width=".9"/></svg></div>
<div class="r" style="left:1325px;top:568px;"><svg width="16" height="16" viewBox="0 0 16 16"><rect x="1" y="1" width="14" height="14" rx="1.5" fill="#fff" stroke="#8a8a98" stroke-width="2"/></svg></div>
<div class="r" style="left:1397px;top:566px;"><svg width="17" height="17" viewBox="0 0 17 17"><rect x="1.5" y="0.5" width="12" height="8" fill="#eef2f8" stroke="#a3abb8" stroke-width="1"/><rect x="3.2" y="2" width="1.3" height="1.3" fill="#93a6c2"/><rect x="5.2" y="2" width="1.3" height="1.3" fill="#93a6c2"/><rect x="7.2" y="2" width="1.3" height="1.3" fill="#93a6c2"/><rect x="9.2" y="2" width="1.3" height="1.3" fill="#93a6c2"/><rect x="11.2" y="2" width="1.3" height="1.3" fill="#93a6c2"/><rect x="3.2" y="4" width="1.3" height="1.3" fill="#93a6c2"/><rect x="5.2" y="4" width="1.3" height="1.3" fill="#93a6c2"/><rect x="7.2" y="4" width="1.3" height="1.3" fill="#93a6c2"/><rect x="9.2" y="4" width="1.3" height="1.3" fill="#93a6c2"/><rect x="11.2" y="4" width="1.3" height="1.3" fill="#93a6c2"/><rect x="3.2" y="6" width="1.3" height="1.3" fill="#93a6c2"/><rect x="5.2" y="6" width="1.3" height="1.3" fill="#93a6c2"/><rect x="7.2" y="6" width="1.3" height="1.3" fill="#93a6c2"/><rect x="9.2" y="6" width="1.3" height="1.3" fill="#93a6c2"/><rect x="11.2" y="6" width="1.3" height="1.3" fill="#93a6c2"/><rect x="10.5" y="8.5" width="5.5" height="6.5" rx="1" fill="#d8d8d8" stroke="#4a4a4a" stroke-width="1"/><rect x="12" y="10.6" width="2.6" height="2.4" fill="#fff" stroke="#444" stroke-width=".6"/><circle cx="5" cy="11.5" r="5" fill="#348812"/><path d="M2.6 11.6 L4.5 13.6 L7.9 9.3" fill="none" stroke="#fff" stroke-width="1.7"/></svg></div>
<div class="r" style="left:1425px;top:566px;"><svg width="15" height="16" viewBox="0 0 15 16"><rect x="0.75" y="0.75" width="13.5" height="14.5" rx=".6" fill="#fde56a" stroke="#eda24a" stroke-width="1.5"/><rect x="2" y="2" width="11" height="1.8" fill="#f3c543"/><rect x="2" y="4" width="11" height="1.2" fill="#fef6c0"/><path d="M1.5 2 V14.5 H13" fill="none" stroke="#fef6c0" stroke-width=".6"/><path d="M1.5 9.6 H4.8 V14.2" fill="none" stroke="#e6a35c" stroke-width="1"/></svg></div>
<div class="btn" style="left:10px;top:602px;width:100px;height:37px;"></div>
<div class="t" style="left:47.80px;top:613.70px;font-size:13.5px;-webkit-text-stroke:0.35px currentColor;letter-spacing:0.125px;">Add</div>
<svg class="r" style="left:672px;top:634px" width="16" height="22" viewBox="0 0 16 22"><path d="M0.2 0 L0.2 19.2 L4.4 15.3 L7 20 L10.6 18.2 L8.4 13.4 L14 13.4 Z" fill="#05070a"/></svg>
<div class="r" style="left:0px;top:885px;width:1455px;height:1px;background:#dedede"></div>
<div class="btn" style="left:9px;top:839px;width:100px;height:37px;background:#037679;border-color:#037679"></div>
<div class="t" style="left:44.00px;top:851.20px;font-size:13.5px;-webkit-text-stroke:0.35px currentColor;color:#fff;letter-spacing:-0.183px;">Save</div>
<div class="btn" style="left:122px;top:839px;width:100px;height:37px;"></div>
<div class="t" style="left:154.50px;top:851.20px;font-size:13.5px;-webkit-text-stroke:0.35px currentColor;letter-spacing:-0.037px;">Reset</div>
<div class="btn" style="left:235px;top:839px;width:100px;height:37px;"></div>
<div class="t" style="left:270.00px;top:851.20px;font-size:13.5px;-webkit-text-stroke:0.35px currentColor;letter-spacing:0.183px;">Back</div>
<div class="btn" style="left:348px;top:839px;width:100px;height:37px;"></div>
<div class="t" style="left:374.00px;top:851.20px;font-size:13.5px;-webkit-text-stroke:0.35px currentColor;letter-spacing:0.225px;">Reports</div>
<div class="t" style="left:466.50px;top:848.90px;font-size:13.5px;font-weight:bold;color:#087482;letter-spacing:-0.208px;">Checkout to E-Plan Review</div>
<div class="t" style="left:656.80px;top:848.90px;font-size:13.5px;font-weight:bold;color:#087482;letter-spacing:-0.200px;">Create New Version</div>
<div class="t" style="left:545.00px;top:894.50px;font-size:13px;-webkit-text-stroke:0.35px currentColor;color:#1a1f2a;">SmartGov Terms and Conditions</div>
<div class="t" style="left:757.00px;top:894.50px;font-size:13px;-webkit-text-stroke:0.35px currentColor;color:#1a1f2a;letter-spacing:-0.035px;">Version: 2.324</div>
<div class="t" style="left:864.00px;top:894.50px;font-size:13px;-webkit-text-stroke:0.35px currentColor;color:#1a1f2a;letter-spacing:0.054px;">Contact Support</div>
</body></html>
